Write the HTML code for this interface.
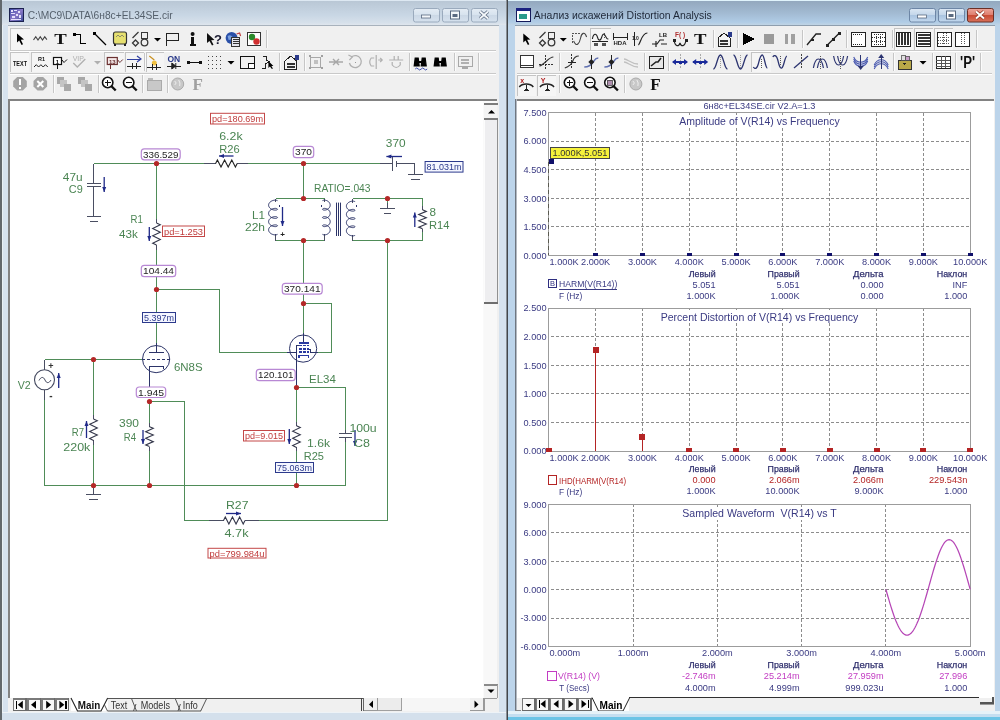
<!DOCTYPE html><html><head><meta charset="utf-8"><style>html,body{margin:0;padding:0;background:#fff;overflow:hidden}svg{display:block}text{font-family:"Liberation Sans",sans-serif}svg{-webkit-font-smoothing:antialiased;will-change:transform}</style></head><body>
<svg width="1000" height="720" viewBox="0 0 1000 720" shape-rendering="crispEdges">
<defs>
<linearGradient id="tbL" x1="0" y1="0" x2="0" y2="1"><stop offset="0" stop-color="#b9c7d5"/><stop offset="0.6" stop-color="#c9d7e5"/><stop offset="0.9" stop-color="#d6e0ea"/><stop offset="1" stop-color="#dfe6ed"/></linearGradient>
<linearGradient id="tbR" x1="0" y1="0" x2="0" y2="1"><stop offset="0" stop-color="#93a8be"/><stop offset="0.5" stop-color="#a2bad2"/><stop offset="0.88" stop-color="#b0cce6"/><stop offset="1" stop-color="#c0d4e4"/></linearGradient>
<linearGradient id="btnL" x1="0" y1="0" x2="0" y2="1"><stop offset="0" stop-color="#e4ecf4"/><stop offset="0.5" stop-color="#d6e2ee"/><stop offset="0.5" stop-color="#cbd8e6"/><stop offset="1" stop-color="#d6e2ee"/></linearGradient>
<linearGradient id="btnR" x1="0" y1="0" x2="0" y2="1"><stop offset="0" stop-color="#dbe7f3"/><stop offset="0.5" stop-color="#c3d6ea"/><stop offset="0.5" stop-color="#aac4e0"/><stop offset="1" stop-color="#c3d9ef"/></linearGradient>
<linearGradient id="btnC" x1="0" y1="0" x2="0" y2="1"><stop offset="0" stop-color="#eba59a"/><stop offset="0.5" stop-color="#de7c6c"/><stop offset="0.5" stop-color="#c94a34"/><stop offset="1" stop-color="#d9735c"/></linearGradient>
</defs>
<rect x="0" y="0" width="1000" height="720" fill="#f0f0f0" stroke="none" stroke-width="1" />
<rect x="0" y="0" width="507" height="720" fill="#d6e2ee" stroke="none" stroke-width="1" />
<rect x="0" y="1" width="507" height="24" fill="url(#tbL)" stroke="none" stroke-width="1" />
<rect x="0" y="0" width="507" height="1" fill="#dde8f2" stroke="none" stroke-width="1" />
<rect x="0" y="0" width="2" height="720" fill="#62686c" stroke="none" stroke-width="1" />
<rect x="2" y="25" width="1" height="695" fill="#e8f0f4" stroke="none" stroke-width="1" />
<rect x="507" y="0" width="493" height="720" fill="#bcd4ea" stroke="none" stroke-width="1" />
<rect x="507" y="1" width="493" height="24" fill="url(#tbR)" stroke="none" stroke-width="1" />
<rect x="507" y="0" width="493" height="1" fill="#e0f4fc" stroke="none" stroke-width="1" />
<rect x="506" y="0" width="1" height="720" fill="#8a9096" stroke="none" stroke-width="1" />
<rect x="507" y="0" width="1" height="720" fill="#42464a" stroke="none" stroke-width="1" />
<rect x="413.5" y="8.5" width="26" height="13.5" rx="2" fill="url(#btnL)" stroke="#9aaabd" stroke-width="1" shape-rendering="auto"/>
<rect x="421.5" y="15" width="9" height="3" fill="#f4f7fa" stroke="#5a6a80" stroke-width="0.8" shape-rendering="auto"/>
<rect x="442.5" y="8.5" width="26" height="13.5" rx="2" fill="url(#btnL)" stroke="#9aaabd" stroke-width="1" shape-rendering="auto"/>
<rect x="450" y="10.5" width="10" height="9" fill="#5a6a80" shape-rendering="auto"/>
<rect x="451" y="11.5" width="8" height="7" fill="#f4f7fa" shape-rendering="auto"/>
<rect x="452.5" y="14" width="5" height="3" fill="#5a6a80" shape-rendering="auto"/>
<rect x="471.5" y="8.5" width="26" height="13.5" rx="2" fill="url(#btnL)" stroke="#9aaabd" stroke-width="1" shape-rendering="auto"/>
<path d="M480 11.5 L488 18.5 M488 11.5 L480 18.5" stroke="#5a6a80" stroke-width="3.4" shape-rendering="auto"/>
<path d="M480 11.5 L488 18.5 M488 11.5 L480 18.5" stroke="#f4f7fa" stroke-width="1.8" shape-rendering="auto"/>
<rect x="909.5" y="8.5" width="26" height="13.5" rx="2" fill="url(#btnR)" stroke="#6d86a6" stroke-width="1" shape-rendering="auto"/>
<rect x="917.5" y="15" width="9" height="3" fill="#fff" stroke="#5a6a80" stroke-width="0.8" shape-rendering="auto"/>
<rect x="938.5" y="8.5" width="26" height="13.5" rx="2" fill="url(#btnR)" stroke="#6d86a6" stroke-width="1" shape-rendering="auto"/>
<rect x="946" y="10.5" width="10" height="9" fill="#5a6a80" shape-rendering="auto"/>
<rect x="947" y="11.5" width="8" height="7" fill="#fff" shape-rendering="auto"/>
<rect x="948.5" y="14" width="5" height="3" fill="#5a6a80" shape-rendering="auto"/>
<rect x="967.5" y="8.5" width="26" height="13.5" rx="2" fill="url(#btnC)" stroke="#6b2f25" stroke-width="1" shape-rendering="auto"/>
<path d="M976 11.5 L984 18.5 M984 11.5 L976 18.5" stroke="#8a3020" stroke-width="3.4" shape-rendering="auto"/>
<path d="M976 11.5 L984 18.5 M984 11.5 L976 18.5" stroke="#fff" stroke-width="2" shape-rendering="auto"/>
<linearGradient id="icg" x1="0" y1="0" x2="1" y2="1"><stop offset="0" stop-color="#3a4aa8"/><stop offset="0.5" stop-color="#8a7ac8"/><stop offset="1" stop-color="#3a4a98"/></linearGradient>
<rect x="9.5" y="8.5" width="14" height="13" fill="url(#icg)" stroke="#1c2250" stroke-width="1" />
<path d="M11 10h2v2h-2zM14 10h3v1h-3zM18 11h2v2h-2zM11 13h4v1h-4zM16 14h2v2h-2zM12 16h3v2h-3zM19 15h2v3h-2zM11 19h10v1h-10z" fill="#e4e0fa"/>
<text x="27.7" y="19" font-size="11" fill="#55606c" text-anchor="start" font-weight="normal" textLength="145" lengthAdjust="spacingAndGlyphs">C:\MC9\DATA\6н8с+EL34SE.cir</text>
<rect x="516" y="8" width="14" height="13" fill="#ffffff" stroke="#141a5a" stroke-width="1" />
<rect x="516" y="8" width="14" height="3" fill="#1a2280" stroke="none" stroke-width="1" />
<rect x="519" y="14" width="8" height="5" fill="#2a9a8a" stroke="none" stroke-width="1" />
<text x="533.8" y="18.8" font-size="11" fill="#1e2838" text-anchor="start" font-weight="normal" textLength="178" lengthAdjust="spacingAndGlyphs">Анализ искажений Distortion Analysis</text>
<rect x="8" y="25" width="491" height="687" fill="#f0f0f0" stroke="none" stroke-width="1" />
<rect x="515" y="25" width="480" height="686" fill="#f0f0f0" stroke="none" stroke-width="1" />
<rect x="8" y="25" width="491" height="1" fill="#a8b2bc" stroke="none" stroke-width="1" />
<rect x="515" y="25" width="480" height="1" fill="#8e9eae" stroke="none" stroke-width="1" />
<rect x="10" y="50" width="486" height="1" fill="#c9c9c9" stroke="none" stroke-width="1" />
<rect x="10" y="51" width="486" height="1" fill="#ffffff" stroke="none" stroke-width="1" />
<rect x="10" y="73" width="486" height="1" fill="#c9c9c9" stroke="none" stroke-width="1" />
<rect x="10" y="74" width="486" height="1" fill="#ffffff" stroke="none" stroke-width="1" />
<rect x="517" y="50" width="475" height="1" fill="#c9c9c9" stroke="none" stroke-width="1" />
<rect x="517" y="51" width="475" height="1" fill="#ffffff" stroke="none" stroke-width="1" />
<rect x="517" y="73" width="475" height="1" fill="#c9c9c9" stroke="none" stroke-width="1" />
<rect x="517" y="74" width="475" height="1" fill="#ffffff" stroke="none" stroke-width="1" />
<rect x="10" y="28" width="20" height="22" fill="#f5f5f5" stroke="none" stroke-width="1" />
<rect x="10" y="28" width="20" height="1" fill="#c4c4c4" stroke="none" stroke-width="1" />
<rect x="10" y="28" width="1" height="22" fill="#c4c4c4" stroke="none" stroke-width="1" />
<path d="M17 33.5 L17 42.5 L19.2 40.5 L21.6 45 L23 44.2 L20.8 39.8 L24 39.6 Z" stroke="none" fill="#000" stroke-width="1" shape-rendering="auto"/>
<path d="M33.5 40 l2.25 -3.3 l2.25 3.3 l2.25 -3.3 l2.25 3.3 l2.25 -3.3 l2.1 3" stroke="#444" fill="none" stroke-width="1.15" shape-rendering="auto"/>
<text x="60.5" y="44.3" font-size="15.5" fill="#111" text-anchor="middle" font-weight="bold" style="font-family:Liberation Serif" textLength="12.5" lengthAdjust="spacingAndGlyphs">T</text>
<rect x="73" y="33" width="3" height="3" fill="#000" stroke="none" stroke-width="1" />
<path d="M75 34.5 H80 V43.5 H86" stroke="#000" fill="none" stroke-width="1" />
<rect x="93" y="32" width="3" height="3" fill="#000" stroke="none" stroke-width="1" />
<path d="M95 34 L106 45" stroke="#000" fill="none" stroke-width="1.2" shape-rendering="auto"/>
<rect x="113.5" y="32" width="13" height="12" rx="2" fill="#e6e070" stroke="#333" stroke-width="1.2" shape-rendering="auto"/>
<path d="M116 37 l2 -2 l2 2 l2 -2 l2 2" stroke="#776" fill="none" stroke-width="0.8" shape-rendering="auto"/>
<rect x="114" y="44" width="2" height="2" fill="#222" stroke="none" stroke-width="1" />
<rect x="124" y="44" width="2" height="2" fill="#222" stroke="none" stroke-width="1" />
<path d="M132.5 38 L138.5 32" stroke="#383838" fill="none" stroke-width="1.3" shape-rendering="auto"/>
<path d="M135.5 40 l3 3 l-3 3 l-3 -3 z" stroke="#383838" fill="none" stroke-width="1.3" shape-rendering="auto"/>
<rect x="141.5" y="32" width="6" height="6" fill="none" stroke="#383838" stroke-width="1" />
<circle cx="144.5" cy="42.5" r="3.3" fill="none" stroke="#383838" stroke-width="1.3" shape-rendering="auto"/>
<path d="M154.0 38 L161.0 38 L157.5 41.5 Z" stroke="none" fill="#000" stroke-width="1" shape-rendering="auto"/>
<path d="M166.5 46 V33 H178.5 V40 H166.5" stroke="#222" fill="none" stroke-width="1" />
<circle cx="192.6" cy="34" r="2" fill="#111" shape-rendering="auto"/>
<path d="M190.6 37 H194.1 V44 H195.6 V46 H189.6 V44 H191.1 V39 H190.6 Z" stroke="none" fill="#111" stroke-width="1" />
<path d="M207 33 L207 43 L209.5 41 L212 45.5 L213.5 44.8 L211.2 40.2 L214.5 40 Z" stroke="none" fill="#111" stroke-width="1" shape-rendering="auto"/>
<text x="218" y="43.5" font-size="13" fill="#1a1a30" text-anchor="middle" font-weight="bold" >?</text>
<circle cx="231.6" cy="38" r="6" fill="#2a50a8" shape-rendering="auto"/>
<path d="M227.6 36 q3 -2 5 1 q-1 3 -4 3 z" stroke="none" fill="#7aa0e0" stroke-width="1" shape-rendering="auto"/>
<rect x="231.6" y="37" width="8" height="9" fill="#e4e4ec" stroke="#333" stroke-width="1" />
<rect x="232.6" y="39" width="6" height="1" fill="#333" stroke="none" stroke-width="1" />
<rect x="232.6" y="41" width="6" height="1" fill="#333" stroke="none" stroke-width="1" />
<rect x="232.6" y="43" width="6" height="1" fill="#333" stroke="none" stroke-width="1" />
<path d="M236.6 34 l3 -1 l1 3" stroke="#c04040" fill="none" stroke-width="1.2" shape-rendering="auto"/>
<rect x="247.5" y="32.5" width="13" height="13" fill="#fff" stroke="#333" stroke-width="1" />
<circle cx="252" cy="37" r="3.2" fill="#2a8a2a" shape-rendering="auto"/>
<circle cx="256.5" cy="41.5" r="3.2" fill="#d03030" shape-rendering="auto"/>
<rect x="266" y="30" width="1" height="18" fill="#c6c6c6" stroke="none" stroke-width="1" />
<rect x="267" y="30" width="1" height="18" fill="#fbfbfb" stroke="none" stroke-width="1" />
<rect x="10" y="52" width="19" height="20" fill="#f5f5f5" stroke="none" stroke-width="1" />
<rect x="10" y="52" width="19" height="1" fill="#c4c4c4" stroke="none" stroke-width="1" />
<rect x="10" y="52" width="1" height="20" fill="#c4c4c4" stroke="none" stroke-width="1" />
<rect x="31" y="52" width="20" height="20" fill="#f5f5f5" stroke="none" stroke-width="1" />
<rect x="31" y="52" width="20" height="1" fill="#c4c4c4" stroke="none" stroke-width="1" />
<rect x="31" y="52" width="1" height="20" fill="#c4c4c4" stroke="none" stroke-width="1" />
<text x="20" y="65.5" font-size="8" fill="#111" text-anchor="middle" font-weight="bold" textLength="14" lengthAdjust="spacingAndGlyphs">TEXT</text>
<text x="41.5" y="61" font-size="5.5" fill="#111" text-anchor="middle" font-weight="bold" >R1</text>
<path d="M34 67 l2.3 -2.3 l2.3 2.3 l2.3 -2.3 l2.3 2.3 l2.3 -2.3 l2.3 2.3" stroke="#222" fill="none" stroke-width="1" shape-rendering="auto"/>
<rect x="53.5" y="57.5" width="8" height="7" fill="#fff" stroke="#111" stroke-width="1.2" shape-rendering="auto"/>
<text x="57.5" y="63.6" font-size="6" fill="#111" text-anchor="middle" font-weight="bold" >1</text>
<path d="M57 65 V68.5" stroke="#111" fill="none" stroke-width="1" />
<path d="M62.0 60 l2 2.5 l1 -1 l2 -2" stroke="#111" fill="none" stroke-width="1" shape-rendering="auto"/>
<text x="78.3" y="61" font-size="7" fill="#b0b0b0" text-anchor="middle" font-weight="normal" >VIP</text>
<path d="M73.3 63 l4 4 l8 -8" stroke="#b0b0b0" fill="none" stroke-width="1.3" shape-rendering="auto"/>
<path d="M94.0 61 L101.0 61 L97.5 64.5 Z" stroke="none" fill="#b0b0b0" stroke-width="1" shape-rendering="auto"/>
<rect x="104" y="52" width="20" height="20" fill="#f5f5f5" stroke="none" stroke-width="1" />
<rect x="104" y="52" width="20" height="1" fill="#c4c4c4" stroke="none" stroke-width="1" />
<rect x="104" y="52" width="1" height="20" fill="#c4c4c4" stroke="none" stroke-width="1" />
<rect x="107.3" y="57.5" width="10" height="7" fill="#f4e8e8" stroke="#6a3030" stroke-width="1.2" shape-rendering="auto"/>
<text x="112.3" y="63.6" font-size="6" fill="#6a3030" text-anchor="middle" font-weight="bold" >13</text>
<path d="M110.8 65 V68.5" stroke="#6a3030" fill="none" stroke-width="1" />
<path d="M117.8 60 l2 2.5 l1 -1 l2 -2" stroke="#6a3030" fill="none" stroke-width="1" shape-rendering="auto"/>
<rect x="125" y="52" width="19" height="20" fill="#f5f5f5" stroke="none" stroke-width="1" />
<rect x="125" y="52" width="19" height="1" fill="#c4c4c4" stroke="none" stroke-width="1" />
<rect x="125" y="52" width="1" height="20" fill="#c4c4c4" stroke="none" stroke-width="1" />
<path d="M127 59 H140" stroke="#3040a0" fill="none" stroke-width="1" />
<path d="M137 56 L141 59 L137 62" stroke="#3040a0" fill="none" stroke-width="1.2" shape-rendering="auto"/>
<path d="M127 66 H141" stroke="#222" fill="none" stroke-width="1" />
<path d="M132 63 V69 M136 63 V69" stroke="#222" fill="none" stroke-width="1" />
<rect x="144" y="53" width="1" height="18" fill="#c6c6c6" stroke="none" stroke-width="1" />
<rect x="145" y="53" width="1" height="18" fill="#fbfbfb" stroke="none" stroke-width="1" />
<rect x="146" y="52" width="18" height="20" fill="#f5f5f5" stroke="none" stroke-width="1" />
<rect x="146" y="52" width="18" height="1" fill="#c4c4c4" stroke="none" stroke-width="1" />
<rect x="146" y="52" width="1" height="20" fill="#c4c4c4" stroke="none" stroke-width="1" />
<path d="M149.3 56 L154.3 60" stroke="#c89020" fill="none" stroke-width="1.2" shape-rendering="auto"/>
<circle cx="154.3" cy="63" r="2.5" fill="#f0c040" shape-rendering="auto"/>
<path d="M147.3 67 H161.3" stroke="#222" fill="none" stroke-width="1" />
<path d="M152.3 64 V70 M156.3 64 V70" stroke="#222" fill="none" stroke-width="1" />
<text x="173.8" y="62" font-size="8.5" fill="#2a3a8a" text-anchor="middle" font-weight="bold" >ON</text>
<path d="M166.8 66 H180.8" stroke="#222" fill="none" stroke-width="1" />
<path d="M171.8 63 L175.8 66 L171.8 69 Z M175.8 63 V69" stroke="#222" fill="#222" stroke-width="1" shape-rendering="auto"/>
<path d="M188 62 H200" stroke="#111" fill="none" stroke-width="1" />
<rect x="186.5" y="60.5" width="3" height="3" fill="#111" stroke="none" stroke-width="1" />
<rect x="198.5" y="60.5" width="3" height="3" fill="#111" stroke="none" stroke-width="1" />
<rect x="208" y="56" width="1" height="1" fill="#444" stroke="none" stroke-width="1" />
<rect x="208" y="60" width="1" height="1" fill="#444" stroke="none" stroke-width="1" />
<rect x="208" y="64" width="1" height="1" fill="#444" stroke="none" stroke-width="1" />
<rect x="208" y="68" width="1" height="1" fill="#444" stroke="none" stroke-width="1" />
<rect x="212" y="56" width="1" height="1" fill="#444" stroke="none" stroke-width="1" />
<rect x="212" y="60" width="1" height="1" fill="#444" stroke="none" stroke-width="1" />
<rect x="212" y="64" width="1" height="1" fill="#444" stroke="none" stroke-width="1" />
<rect x="212" y="68" width="1" height="1" fill="#444" stroke="none" stroke-width="1" />
<rect x="216" y="56" width="1" height="1" fill="#444" stroke="none" stroke-width="1" />
<rect x="216" y="60" width="1" height="1" fill="#444" stroke="none" stroke-width="1" />
<rect x="216" y="64" width="1" height="1" fill="#444" stroke="none" stroke-width="1" />
<rect x="216" y="68" width="1" height="1" fill="#444" stroke="none" stroke-width="1" />
<rect x="220" y="56" width="1" height="1" fill="#444" stroke="none" stroke-width="1" />
<rect x="220" y="60" width="1" height="1" fill="#444" stroke="none" stroke-width="1" />
<rect x="220" y="64" width="1" height="1" fill="#444" stroke="none" stroke-width="1" />
<rect x="220" y="68" width="1" height="1" fill="#444" stroke="none" stroke-width="1" />
<path d="M227.5 61 L234.5 61 L231 64.5 Z" stroke="none" fill="#000" stroke-width="1" shape-rendering="auto"/>
<rect x="240" y="56" width="14" height="12" fill="none" stroke="#111" stroke-width="1" />
<rect x="248" y="63" width="6" height="5" fill="#fff" stroke="#111" stroke-width="1" />
<path d="M263.4 56 H266.4 V60 L269.4 62 L265.4 64 V68 H262.4" stroke="#222" fill="none" stroke-width="1" />
<path d="M268.4 61 L268.4 68 L269.9 66.5 L271.9 69 L272.9 68.5 L271.4 66 L273.4 66 Z" stroke="none" fill="#000" stroke-width="1" shape-rendering="auto"/>
<rect x="279" y="53" width="1" height="18" fill="#c6c6c6" stroke="none" stroke-width="1" />
<rect x="280" y="53" width="1" height="18" fill="#fbfbfb" stroke="none" stroke-width="1" />
<path d="M284.8 61 L290.8 56 L296.8 61 V69 H284.8 Z" stroke="#222" fill="#f4f4f4" stroke-width="1" />
<rect x="286.8" y="63" width="8" height="1.5" fill="#333" stroke="none" stroke-width="1" />
<rect x="286.8" y="66" width="8" height="1.5" fill="#333" stroke="none" stroke-width="1" />
<rect x="294.8" y="55" width="4" height="5" fill="#2a3a8a" stroke="none" stroke-width="1" />
<rect x="304" y="53" width="1" height="18" fill="#c6c6c6" stroke="none" stroke-width="1" />
<rect x="305" y="53" width="1" height="18" fill="#fbfbfb" stroke="none" stroke-width="1" />
<rect x="310.9" y="57" width="10" height="10" fill="none" stroke="#a8a8a8" stroke-width="1" />
<rect x="308.9" y="55" width="2" height="2" fill="#a0a0a0" stroke="none" stroke-width="1" />
<rect x="320.9" y="55" width="2" height="2" fill="#a0a0a0" stroke="none" stroke-width="1" />
<rect x="308.9" y="67" width="2" height="2" fill="#a0a0a0" stroke="none" stroke-width="1" />
<rect x="320.9" y="67" width="2" height="2" fill="#a0a0a0" stroke="none" stroke-width="1" />
<rect x="313.9" y="60" width="4" height="4" fill="#c0c0c0" stroke="none" stroke-width="1" />
<path d="M329 62 H343 M333 59 L336 62 L333 65 M339 59 L336 62 L339 65" stroke="#a8a8a8" fill="none" stroke-width="1.4" shape-rendering="auto"/>
<path d="M351.4 57 A6 6 0 1 1 349.4 63" stroke="#b0b0b0" fill="none" stroke-width="1.3" shape-rendering="auto"/>
<path d="M348.4 55 L352.4 57 L349.4 60" stroke="#b0b0b0" fill="none" stroke-width="1.2" shape-rendering="auto"/>
<rect x="354.9" y="61.5" width="1.5" height="1.5" fill="#999" stroke="none" stroke-width="1" />
<path d="M376.2 55 V69 M374.2 58 H371.2 Q368.2 62 371.2 66 H374.2 M378.2 60 H382.2 M380.2 58 L382.2 60 L380.2 62" stroke="#b0b0b0" fill="none" stroke-width="1.2" shape-rendering="auto"/>
<path d="M389.2 60 H403.2 M392.2 62 V65 Q396.2 70 400.2 65 V62 M394.2 56 V60 M398.2 56 V60" stroke="#b0b0b0" fill="none" stroke-width="1.2" shape-rendering="auto"/>
<rect x="409" y="53" width="1" height="18" fill="#c6c6c6" stroke="none" stroke-width="1" />
<rect x="410" y="53" width="1" height="18" fill="#fbfbfb" stroke="none" stroke-width="1" />
<path d="M414.2 66 L415.2 58 H418.2 L419.2 66 Z M421.2 66 L422.2 58 H425.2 L426.2 66 Z" stroke="#000" fill="#000" stroke-width="1.2" shape-rendering="auto"/>
<rect x="418.2" y="61" width="4" height="2" fill="#000" stroke="none" stroke-width="1" />
<path d="M415.2 69 q1.5 -2 3 0 t3 0 t3 0 t3 0" stroke="#4050b0" fill="none" stroke-width="1" shape-rendering="auto"/>
<path d="M434.2 66 L435.2 58 H438.2 L439.2 66 Z M441.2 66 L442.2 58 H445.2 L446.2 66 Z" stroke="#000" fill="#000" stroke-width="1.2" shape-rendering="auto"/>
<rect x="438.2" y="61" width="4" height="2" fill="#000" stroke="none" stroke-width="1" />
<rect x="453.5" y="53" width="1" height="18" fill="#c6c6c6" stroke="none" stroke-width="1" />
<rect x="454.5" y="53" width="1" height="18" fill="#fbfbfb" stroke="none" stroke-width="1" />
<rect x="458" y="56" width="14" height="10" fill="none" stroke="#a8a8a8" stroke-width="1" />
<rect x="461" y="59" width="8" height="1.5" fill="#b0b0b0" stroke="none" stroke-width="1" />
<rect x="461" y="62" width="8" height="1.5" fill="#b0b0b0" stroke="none" stroke-width="1" />
<rect x="462" y="67" width="6" height="2" fill="#a8a8a8" stroke="none" stroke-width="1" />
<rect x="477.5" y="53" width="1" height="18" fill="#c6c6c6" stroke="none" stroke-width="1" />
<rect x="478.5" y="53" width="1" height="18" fill="#fbfbfb" stroke="none" stroke-width="1" />
<path d="M17.2 77 h5.6 l4 4 v5.6 l-4 4 h-5.6 l-4 -4 v-5.6 z" fill="#a4a4a4" shape-rendering="auto"/>
<rect x="19" y="79" width="2" height="6" fill="#fff" stroke="none" stroke-width="1" />
<rect x="19" y="87" width="2" height="2" fill="#fff" stroke="none" stroke-width="1" />
<path d="M37.5 77 h5.6 l4 4 v5.6 l-4 4 h-5.6 l-4 -4 v-5.6 z" fill="#a4a4a4" shape-rendering="auto"/>
<path d="M37.3 81 L43.3 87 M43.3 81 L37.3 87" stroke="#fff" fill="none" stroke-width="2" shape-rendering="auto"/>
<rect x="52.5" y="75" width="1" height="18" fill="#c6c6c6" stroke="none" stroke-width="1" />
<rect x="53.5" y="75" width="1" height="18" fill="#fbfbfb" stroke="none" stroke-width="1" />
<rect x="57.400000000000006" y="77" width="7" height="7" fill="#a8a8a8" stroke="none" stroke-width="1" />
<rect x="60.400000000000006" y="80" width="7" height="7" fill="#c4c4c4" stroke="none" stroke-width="1" />
<rect x="64.4" y="84" width="7" height="7" fill="#a8a8a8" stroke="none" stroke-width="1" />
<rect x="77.5" y="77" width="7" height="7" fill="#a8a8a8" stroke="none" stroke-width="1" />
<rect x="80.5" y="80" width="7" height="7" fill="#c4c4c4" stroke="none" stroke-width="1" />
<rect x="84.5" y="84" width="7" height="7" fill="#a8a8a8" stroke="none" stroke-width="1" />
<rect x="97.5" y="75" width="1" height="18" fill="#c6c6c6" stroke="none" stroke-width="1" />
<rect x="98.5" y="75" width="1" height="18" fill="#fbfbfb" stroke="none" stroke-width="1" />
<circle cx="107.7" cy="82.5" r="5.2" fill="#fff" stroke="#111" stroke-width="1.6" shape-rendering="auto"/>
<path d="M111.2 86 L115.7 90.5" stroke="#111" fill="none" stroke-width="2.4" shape-rendering="auto"/>
<path d="M104.7 82.5 H110.7 M107.7 79.5 V85.5" stroke="#111" fill="none" stroke-width="1" />
<circle cx="128.7" cy="82.5" r="5.2" fill="#fff" stroke="#111" stroke-width="1.6" shape-rendering="auto"/>
<path d="M132.2 86 L136.7 90.5" stroke="#111" fill="none" stroke-width="2.4" shape-rendering="auto"/>
<path d="M125.69999999999999 82.5 H131.7" stroke="#111" fill="none" stroke-width="1" />
<rect x="142" y="75" width="1" height="18" fill="#c6c6c6" stroke="none" stroke-width="1" />
<rect x="143" y="75" width="1" height="18" fill="#fbfbfb" stroke="none" stroke-width="1" />
<rect x="147.3" y="80" width="14" height="10" fill="#c8c8c8" stroke="#aaa" stroke-width="1" />
<rect x="148.3" y="78" width="5" height="2" fill="#bbb" stroke="none" stroke-width="1" />
<rect x="166.5" y="75" width="1" height="18" fill="#c6c6c6" stroke="none" stroke-width="1" />
<rect x="167.5" y="75" width="1" height="18" fill="#fbfbfb" stroke="none" stroke-width="1" />
<circle cx="177.7" cy="84" r="6" fill="#c8c8c8" stroke="#aaa" shape-rendering="auto"/>
<path d="M174.7 81 q3 2 0 4 M178.7 80 q2 3 1 6" stroke="#eee" fill="none" stroke-width="1" shape-rendering="auto"/>
<text x="197.8" y="90" font-size="17" fill="#a0a0a0" text-anchor="middle" font-weight="bold" style="font-family:Liberation Serif">F</text>
<path d="M523.3 33.5 L523.3 42.5 L525.5 40.5 L527.9 45 L529.3 44.2 L527.0999999999999 39.8 L530.3 39.6 Z" stroke="none" fill="#000" stroke-width="1" shape-rendering="auto"/>
<path d="M539.5 38 L545.5 32" stroke="#383838" fill="none" stroke-width="1.3" shape-rendering="auto"/>
<path d="M542.5 40 l3 3 l-3 3 l-3 -3 z" stroke="#383838" fill="none" stroke-width="1.3" shape-rendering="auto"/>
<rect x="548.5" y="32" width="6" height="6" fill="none" stroke="#383838" stroke-width="1" />
<circle cx="551.5" cy="42.5" r="3.3" fill="none" stroke="#383838" stroke-width="1.3" shape-rendering="auto"/>
<path d="M559.8 38 L566.8 38 L563.3 41.5 Z" stroke="none" fill="#000" stroke-width="1" shape-rendering="auto"/>
<path d="M572.6 43 V33 H580.6" stroke="#555" fill="none" stroke-width="1" stroke-dasharray="2 1"/>
<path d="M573.6 41 C576.6 48 579.6 43 580.6 38 S584.6 31 586.6 37" stroke="#444" fill="none" stroke-width="1.1" shape-rendering="auto"/>
<rect x="590" y="28" width="21" height="22" fill="#f5f5f5" stroke="none" stroke-width="1" />
<rect x="590" y="28" width="21" height="1" fill="#c4c4c4" stroke="none" stroke-width="1" />
<rect x="590" y="28" width="1" height="22" fill="#c4c4c4" stroke="none" stroke-width="1" />
<path d="M592.4 39 C593.4 33 596.4 33 597.4 37 S600.4 41 601.4 38 S603.4 32 605.4 36 S607.4 39 608.4 39" stroke="#222" fill="none" stroke-width="1.1" shape-rendering="auto"/>
<path d="M604.4 33 V39" stroke="#555" fill="none" stroke-width="1" stroke-dasharray="1 1"/>
<path d="M592.4 41 H608.4" stroke="#222" fill="none" stroke-width="1" />
<rect x="594.4" y="43" width="4" height="3" fill="#555" stroke="none" stroke-width="1" />
<rect x="602.4" y="43" width="4" height="3" fill="#555" stroke="none" stroke-width="1" />
<path d="M613 33 V40 M627 33 V40 M613 37 H627" stroke="#222" fill="none" stroke-width="1" />
<text x="620" y="45" font-size="6" fill="#222" text-anchor="middle" font-weight="bold" >HDA</text>
<path d="M634.4 32 V46" stroke="#222" fill="none" stroke-width="1" />
<text x="635.4" y="40" font-size="5" fill="#222" text-anchor="middle" font-weight="bold" >1.0</text>
<path d="M638.4 45 C640.4 44 641.4 33 647.4 33" stroke="#222" fill="none" stroke-width="1.2" shape-rendering="auto"/>
<text x="663" y="37" font-size="6" fill="#222" text-anchor="middle" font-weight="bold" >LB</text>
<path d="M652 44 H657 L660 40 H664 M656 41 V47 M661 44 H667" stroke="#222" fill="none" stroke-width="1.2" shape-rendering="auto"/>
<text x="680" y="37" font-size="6.5" fill="#b03030" text-anchor="middle" font-weight="bold" >F( )</text>
<path d="M674 40 C675 47 679 47 680 43 C681 47 685 47 686 40" stroke="#222" fill="none" stroke-width="1.2" shape-rendering="auto"/>
<rect x="673" y="39" width="3" height="3" fill="#222" stroke="none" stroke-width="1" />
<rect x="685" y="39" width="3" height="3" fill="#222" stroke="none" stroke-width="1" />
<text x="700.2" y="44.3" font-size="15.5" fill="#111" text-anchor="middle" font-weight="bold" style="font-family:Liberation Serif" textLength="12.5" lengthAdjust="spacingAndGlyphs">T</text>
<rect x="713" y="30" width="1" height="18" fill="#c6c6c6" stroke="none" stroke-width="1" />
<rect x="714" y="30" width="1" height="18" fill="#fbfbfb" stroke="none" stroke-width="1" />
<path d="M718 38 L724 33 L730 38 V46 H718 Z" stroke="#222" fill="#f4f4f4" stroke-width="1" />
<rect x="720" y="40" width="8" height="1.5" fill="#333" stroke="none" stroke-width="1" />
<rect x="720" y="43" width="8" height="1.5" fill="#333" stroke="none" stroke-width="1" />
<rect x="728" y="32" width="4" height="5" fill="#2a3a8a" stroke="none" stroke-width="1" />
<rect x="737" y="30" width="1" height="18" fill="#c6c6c6" stroke="none" stroke-width="1" />
<rect x="738" y="30" width="1" height="18" fill="#fbfbfb" stroke="none" stroke-width="1" />
<path d="M743 33 L755 39 L743 45 Z" stroke="none" fill="#000" stroke-width="1" />
<rect x="764" y="34" width="10" height="10" fill="#9a9a9a" stroke="none" stroke-width="1" />
<rect x="784.9" y="34" width="3.5" height="10" fill="#a0a0a0" stroke="none" stroke-width="1" />
<rect x="791.4" y="34" width="3.5" height="10" fill="#a0a0a0" stroke="none" stroke-width="1" />
<rect x="802" y="30" width="1" height="18" fill="#c6c6c6" stroke="none" stroke-width="1" />
<rect x="803" y="30" width="1" height="18" fill="#fbfbfb" stroke="none" stroke-width="1" />
<path d="M807 45 L816 34 H821" stroke="#222" fill="none" stroke-width="1.3" shape-rendering="auto"/>
<rect x="811" y="38.5" width="2.5" height="2.5" fill="#222" stroke="none" stroke-width="1" />
<path d="M827.4 45 L839.4 33" stroke="#222" fill="none" stroke-width="1.3" shape-rendering="auto"/>
<rect x="825.9" y="43.5" width="3" height="3" fill="#222" stroke="none" stroke-width="1" />
<rect x="831.9" y="37.5" width="3" height="3" fill="#222" stroke="none" stroke-width="1" />
<rect x="837.9" y="31.5" width="3" height="3" fill="#222" stroke="none" stroke-width="1" />
<rect x="846" y="30" width="1" height="18" fill="#c6c6c6" stroke="none" stroke-width="1" />
<rect x="847" y="30" width="1" height="18" fill="#fbfbfb" stroke="none" stroke-width="1" />
<rect x="851.1" y="32" width="14" height="14" fill="#fff" stroke="#222" stroke-width="1" />
<path d="M853.1 34 H863.1 M853.1 44 H863.1" stroke="#222" fill="none" stroke-width="1" stroke-dasharray="1 1"/>
<rect x="871.5" y="32" width="14" height="14" fill="#fff" stroke="#222" stroke-width="1" />
<path d="M873.5 34 H883.5 M873.5 44 H883.5" stroke="#222" fill="none" stroke-width="1" stroke-dasharray="1 1"/>
<path d="M871.5 37 H885.5 M871.5 41 H885.5 M876.5 32 V46 M880.5 32 V46" stroke="#333" fill="none" stroke-width="1" stroke-dasharray="1 1"/>
<rect x="892" y="30" width="1" height="18" fill="#c6c6c6" stroke="none" stroke-width="1" />
<rect x="893" y="30" width="1" height="18" fill="#fbfbfb" stroke="none" stroke-width="1" />
<rect x="894" y="28" width="19" height="22" fill="#f5f5f5" stroke="none" stroke-width="1" />
<rect x="894" y="28" width="19" height="1" fill="#c4c4c4" stroke="none" stroke-width="1" />
<rect x="894" y="28" width="1" height="22" fill="#c4c4c4" stroke="none" stroke-width="1" />
<rect x="914" y="28" width="19" height="22" fill="#f5f5f5" stroke="none" stroke-width="1" />
<rect x="914" y="28" width="19" height="1" fill="#c4c4c4" stroke="none" stroke-width="1" />
<rect x="914" y="28" width="1" height="22" fill="#c4c4c4" stroke="none" stroke-width="1" />
<rect x="934" y="28" width="19" height="22" fill="#f5f5f5" stroke="none" stroke-width="1" />
<rect x="934" y="28" width="19" height="1" fill="#c4c4c4" stroke="none" stroke-width="1" />
<rect x="934" y="28" width="1" height="22" fill="#c4c4c4" stroke="none" stroke-width="1" />
<rect x="896.5" y="32" width="14" height="14" fill="#fff" stroke="#222" stroke-width="1" />
<rect x="898.0" y="33" width="2" height="12" fill="#333" stroke="none" stroke-width="1" />
<rect x="901.0" y="33" width="2" height="12" fill="#333" stroke="none" stroke-width="1" />
<rect x="904.0" y="33" width="2" height="12" fill="#333" stroke="none" stroke-width="1" />
<rect x="907.0" y="33" width="2" height="12" fill="#333" stroke="none" stroke-width="1" />
<rect x="916.7" y="32" width="14" height="14" fill="#fff" stroke="#222" stroke-width="1" />
<rect x="917.7" y="33.5" width="12" height="2" fill="#333" stroke="none" stroke-width="1" />
<rect x="917.7" y="36.5" width="12" height="2" fill="#333" stroke="none" stroke-width="1" />
<rect x="917.7" y="39.5" width="12" height="2" fill="#333" stroke="none" stroke-width="1" />
<rect x="917.7" y="42.5" width="12" height="2" fill="#333" stroke="none" stroke-width="1" />
<rect x="937" y="32" width="14" height="14" fill="#fff" stroke="#222" stroke-width="1" />
<path d="M943 33 V45 M946 33 V45 M938 37 H950 M938 40 H950 M938 43 H950" stroke="#555" fill="none" stroke-width="1" stroke-dasharray="1 1"/>
<rect x="955.8" y="32" width="14" height="14" fill="#fff" stroke="#222" stroke-width="1" />
<path d="M961.8 33 V45 M964.8 33 V45" stroke="#555" fill="none" stroke-width="1" stroke-dasharray="1 1"/>
<rect x="975.5" y="30" width="1" height="18" fill="#c6c6c6" stroke="none" stroke-width="1" />
<rect x="976.5" y="30" width="1" height="18" fill="#fbfbfb" stroke="none" stroke-width="1" />
<rect x="520.5" y="55.5" width="13" height="12" fill="#fff" stroke="#333" stroke-width="1" />
<rect x="521" y="64.5" width="12" height="1" fill="#333" stroke="none" stroke-width="1" />
<path d="M545.4 55 V69 M539.4 64 H553.4" stroke="#333" fill="none" stroke-width="1" stroke-dasharray="2 1"/>
<path d="M539.4 66 C544.4 65 548.4 57 553.4 57" stroke="#333" fill="none" stroke-width="1.1" shape-rendering="auto"/>
<rect x="559" y="53" width="1" height="18" fill="#c6c6c6" stroke="none" stroke-width="1" />
<rect x="560" y="53" width="1" height="18" fill="#fbfbfb" stroke="none" stroke-width="1" />
<path d="M564.8 68 C567.8 67 571.8 64 572.8 61 S575.8 56 578.8 56" stroke="#333" fill="none" stroke-width="1.2" shape-rendering="auto"/>
<path d="M571.8 54 V69" stroke="#333" fill="none" stroke-width="1" stroke-dasharray="2 1"/>
<path d="M567.8 62 H575.8" stroke="#222" fill="none" stroke-width="1" />
<path d="M584.3 67 C588.3 67 591.3 65 593.3 62 S595.3 58 598.3 58" stroke="#6070b0" fill="none" stroke-width="1.5" shape-rendering="auto"/>
<path d="M591.3 55 V69" stroke="#222" fill="none" stroke-width="1" />
<path d="M588.3 62 L591.3 59 L594.3 62 L591.3 65 Z" stroke="none" fill="#222" stroke-width="1" shape-rendering="auto"/>
<path d="M604.4 67 C608.4 67 611.4 65 613.4 62 S615.4 58 618.4 58" stroke="#6070b0" fill="none" stroke-width="1.5" shape-rendering="auto"/>
<path d="M611.4 55 V69" stroke="#222" fill="none" stroke-width="1" />
<path d="M608.4 62 L611.4 59 L614.4 62 L611.4 65 Z" stroke="none" fill="#222" stroke-width="1" shape-rendering="auto"/>
<path d="M624 59 C628 59 631 64 638 64 M624 62 C628 62 631 67 638 67" stroke="#c0c0c0" fill="none" stroke-width="1.3" shape-rendering="auto"/>
<rect x="643.5" y="53" width="1" height="18" fill="#c6c6c6" stroke="none" stroke-width="1" />
<rect x="644.5" y="53" width="1" height="18" fill="#fbfbfb" stroke="none" stroke-width="1" />
<rect x="649" y="56" width="14" height="12" fill="#e8e8e8" stroke="#222" stroke-width="1" />
<path d="M651 66 L656 62 H658 L661 58" stroke="#222" fill="none" stroke-width="1.6" shape-rendering="auto"/>
<rect x="668" y="53" width="1" height="18" fill="#c6c6c6" stroke="none" stroke-width="1" />
<rect x="669" y="53" width="1" height="18" fill="#fbfbfb" stroke="none" stroke-width="1" />
<path d="M680 54 V69" stroke="#aaa" fill="none" stroke-width="1" stroke-dasharray="2 1"/>
<path d="M673 62 H687" stroke="#1a2a9a" fill="none" stroke-width="1.8" />
<path d="M672 62 L676 59 V65 Z M688 62 L684 59 V65 Z" stroke="none" fill="#1a2a9a" stroke-width="1" shape-rendering="auto"/>
<rect x="678.5" y="60.5" width="3" height="3" fill="#1a2a9a" stroke="none" stroke-width="1" />
<path d="M700.2 54 V69" stroke="#aaa" fill="none" stroke-width="1" stroke-dasharray="2 1"/>
<path d="M693.2 62 H707.2" stroke="#1a2a9a" fill="none" stroke-width="1.8" />
<path d="M692.2 62 L696.2 59 V65 Z M708.2 62 L704.2 59 V65 Z" stroke="none" fill="#1a2a9a" stroke-width="1" shape-rendering="auto"/>
<rect x="698.7" y="60.5" width="3" height="3" fill="#1a2a9a" stroke="none" stroke-width="1" />
<path d="M720.4 55 V69" stroke="#999" fill="none" stroke-width="1" stroke-dasharray="1 1"/>
<path d="M713.4 69 C716.4 69 717.4 55 720.4 55 C723.4 55 724.4 69 727.4 69" stroke="#2c3470" fill="none" stroke-width="1.3" shape-rendering="auto"/>
<path d="M740.5 55 V69" stroke="#999" fill="none" stroke-width="1" stroke-dasharray="1 1"/>
<path d="M733.5 55 C736.5 55 737.5 69 740.5 69 C743.5 69 744.5 55 747.5 55" stroke="#2c3470" fill="none" stroke-width="1.3" shape-rendering="auto"/>
<rect x="751" y="52" width="20" height="20" fill="#f5f5f5" stroke="none" stroke-width="1" />
<rect x="751" y="52" width="20" height="1" fill="#c4c4c4" stroke="none" stroke-width="1" />
<rect x="751" y="52" width="1" height="20" fill="#c4c4c4" stroke="none" stroke-width="1" />
<path d="M753.3 67 C755.3 70 757.3 68 758.3 64 S760.3 55 762.3 55 S765.3 68 767.3 68" stroke="#2c3470" fill="none" stroke-width="1.3" shape-rendering="auto"/>
<path d="M761.3 59 V69" stroke="#555" fill="none" stroke-width="1" stroke-dasharray="1 1"/>
<path d="M772.8 57 C774.8 54 776.8 56 777.8 60 S779.8 69 781.8 68 S784.8 57 786.8 56" stroke="#2c3470" fill="none" stroke-width="1.3" shape-rendering="auto"/>
<path d="M780.8 56 V65" stroke="#555" fill="none" stroke-width="1" stroke-dasharray="1 1"/>
<path d="M794 68 L808 56" stroke="#2c3470" fill="none" stroke-width="1.3" shape-rendering="auto"/>
<path d="M801 54 V69" stroke="#444" fill="none" stroke-width="1" stroke-dasharray="2 1"/>
<path d="M813.4 68 C815.4 56 821.4 56 823.4 68 M817.4 68 C819.4 56 825.4 56 827.4 68" stroke="#2c3470" fill="none" stroke-width="1.2" shape-rendering="auto"/>
<path d="M820.4 56 V69" stroke="#555" fill="none" stroke-width="1" stroke-dasharray="1 1"/>
<path d="M833.6 56 C835.6 68 841.6 68 843.6 56 M837.6 56 C839.6 68 845.6 68 847.6 56" stroke="#2c3470" fill="none" stroke-width="1.2" shape-rendering="auto"/>
<path d="M840.6 56 V69" stroke="#555" fill="none" stroke-width="1" stroke-dasharray="1 1"/>
<path d="M853.7 57 C856.7 64 864.7 64 867.7 57" stroke="#4a5ab0" fill="none" stroke-width="1.1" shape-rendering="auto"/>
<path d="M853.7 59 C856.7 66 864.7 66 867.7 59" stroke="#4a5ab0" fill="none" stroke-width="1.1" shape-rendering="auto"/>
<path d="M853.7 61 C856.7 68 864.7 68 867.7 61" stroke="#4a5ab0" fill="none" stroke-width="1.1" shape-rendering="auto"/>
<path d="M860.7 55 V69" stroke="#2c3470" fill="none" stroke-width="1" />
<path d="M857.7 66 L860.7 70 L863.7 66 Z" stroke="none" fill="#2c3470" stroke-width="1" shape-rendering="auto"/>
<path d="M874.2 65 C877.2 58 885.2 58 888.2 65" stroke="#4a5ab0" fill="none" stroke-width="1.1" shape-rendering="auto"/>
<path d="M874.2 67 C877.2 60 885.2 60 888.2 67" stroke="#4a5ab0" fill="none" stroke-width="1.1" shape-rendering="auto"/>
<path d="M874.2 69 C877.2 62 885.2 62 888.2 69" stroke="#4a5ab0" fill="none" stroke-width="1.1" shape-rendering="auto"/>
<path d="M881.2 55 V69" stroke="#2c3470" fill="none" stroke-width="1" />
<path d="M878.2 58 L881.2 54 L884.2 58 Z" stroke="none" fill="#2c3470" stroke-width="1" shape-rendering="auto"/>
<rect x="893" y="53" width="1" height="18" fill="#c6c6c6" stroke="none" stroke-width="1" />
<rect x="894" y="53" width="1" height="18" fill="#fbfbfb" stroke="none" stroke-width="1" />
<rect x="898.5" y="60" width="13" height="9" fill="#b8a848" stroke="#333" stroke-width="1" />
<rect x="901.5" y="55" width="4" height="5" fill="#e0e0e0" stroke="#555" stroke-width="0.8" />
<rect x="905.5" y="56" width="4" height="4" fill="#c8a0c8" stroke="#555" stroke-width="0.8" />
<path d="M903.0 63 h3 l-1.5 2 z" stroke="none" fill="#222" stroke-width="1" />
<path d="M919.5 61 L926.5 61 L923 64.5 Z" stroke="none" fill="#000" stroke-width="1" shape-rendering="auto"/>
<rect x="931.5" y="53" width="1" height="18" fill="#c6c6c6" stroke="none" stroke-width="1" />
<rect x="932.5" y="53" width="1" height="18" fill="#fbfbfb" stroke="none" stroke-width="1" />
<rect x="936.3" y="56" width="14" height="12" fill="#fff" stroke="#222" stroke-width="1" />
<path d="M936.3 60 H950.3 M936.3 63 H950.3 M936.3 66 H950.3 M941.3 56 V68 M945.3 56 V68" stroke="#555" fill="none" stroke-width="1" />
<rect x="955" y="53" width="1" height="18" fill="#c6c6c6" stroke="none" stroke-width="1" />
<rect x="956" y="53" width="1" height="18" fill="#fbfbfb" stroke="none" stroke-width="1" />
<text x="967.6" y="68" font-size="16" fill="#111" text-anchor="middle" font-weight="bold" textLength="15" lengthAdjust="spacingAndGlyphs">'P'</text>
<rect x="980" y="53" width="1" height="18" fill="#c6c6c6" stroke="none" stroke-width="1" />
<rect x="981" y="53" width="1" height="18" fill="#fbfbfb" stroke="none" stroke-width="1" />
<rect x="517" y="75" width="19" height="21" fill="#f5f5f5" stroke="none" stroke-width="1" />
<rect x="517" y="75" width="19" height="1" fill="#c4c4c4" stroke="none" stroke-width="1" />
<rect x="517" y="75" width="1" height="21" fill="#c4c4c4" stroke="none" stroke-width="1" />
<rect x="537" y="75" width="19" height="21" fill="#f5f5f5" stroke="none" stroke-width="1" />
<rect x="537" y="75" width="19" height="1" fill="#c4c4c4" stroke="none" stroke-width="1" />
<rect x="537" y="75" width="1" height="21" fill="#c4c4c4" stroke="none" stroke-width="1" />
<text x="522.3" y="83" font-size="7" fill="#b02020" text-anchor="middle" font-weight="bold" >x</text>
<path d="M519.3 87 C522.3 83 530.3 83 533.3 87" stroke="#222" fill="none" stroke-width="1.5" shape-rendering="auto"/>
<path d="M526.3 85 V90" stroke="#222" fill="none" stroke-width="1" />
<path d="M523.3 91 L526.3 88 L529.3 91 Z" stroke="none" fill="#222" stroke-width="1" />
<text x="543" y="83" font-size="7" fill="#b02020" text-anchor="middle" font-weight="bold" >Y</text>
<path d="M540 87 C543 83 551 83 554 87" stroke="#222" fill="none" stroke-width="1.5" shape-rendering="auto"/>
<path d="M547 85 V90" stroke="#222" fill="none" stroke-width="1" />
<path d="M544 91 L547 88 L550 91 Z" stroke="none" fill="#222" stroke-width="1" />
<rect x="559" y="75" width="1" height="18" fill="#c6c6c6" stroke="none" stroke-width="1" />
<rect x="560" y="75" width="1" height="18" fill="#fbfbfb" stroke="none" stroke-width="1" />
<circle cx="569.5" cy="82.5" r="5.2" fill="#fff" stroke="#111" stroke-width="1.6" shape-rendering="auto"/>
<path d="M573 86 L577.5 90.5" stroke="#111" fill="none" stroke-width="2.4" shape-rendering="auto"/>
<path d="M566.5 82.5 H572.5 M569.5 79.5 V85.5" stroke="#111" fill="none" stroke-width="1" />
<circle cx="589.8" cy="82.5" r="5.2" fill="#fff" stroke="#111" stroke-width="1.6" shape-rendering="auto"/>
<path d="M593.3 86 L597.8 90.5" stroke="#111" fill="none" stroke-width="2.4" shape-rendering="auto"/>
<path d="M586.8 82.5 H592.8" stroke="#111" fill="none" stroke-width="1" />
<circle cx="609.9" cy="82.5" r="5.2" fill="#fff" stroke="#111" stroke-width="1.6" shape-rendering="auto"/>
<path d="M613.4 86 L617.9 90.5" stroke="#111" fill="none" stroke-width="2.4" shape-rendering="auto"/>
<rect x="607.4" y="80" width="5" height="5" fill="#b090b0" stroke="#444" stroke-width="0.8" />
<rect x="624" y="75" width="1" height="18" fill="#c6c6c6" stroke="none" stroke-width="1" />
<rect x="625" y="75" width="1" height="18" fill="#fbfbfb" stroke="none" stroke-width="1" />
<circle cx="635.9" cy="84" r="6" fill="#c8c8c8" stroke="#aaa" shape-rendering="auto"/>
<path d="M632.9 81 q3 2 0 4 M636.9 80 q2 3 1 6" stroke="#eee" fill="none" stroke-width="1" shape-rendering="auto"/>
<text x="655.4" y="90" font-size="17" fill="#111" text-anchor="middle" font-weight="bold" style="font-family:Liberation Serif">F</text>
<rect x="8" y="99" width="489" height="2" fill="#828282" stroke="none" stroke-width="1" />
<rect x="8" y="99" width="2" height="599" fill="#828282" stroke="none" stroke-width="1" />
<rect x="10" y="101" width="473" height="597" fill="#ffffff" stroke="none" stroke-width="1" />
<rect x="483" y="101" width="14" height="597" fill="#fafafa" stroke="none" stroke-width="1" />
<rect x="484" y="104" width="13" height="15" fill="#f4f4f4" stroke="none" stroke-width="1" />
<rect x="484" y="103" width="13.5" height="2" fill="#7c7c7c" stroke="none" stroke-width="1" />
<rect x="484" y="118" width="13.5" height="2" fill="#7c7c7c" stroke="none" stroke-width="1" />
<path d="M488 113.5 L495 113.5 L491.5 110 Z" stroke="none" fill="#000" stroke-width="1" shape-rendering="auto"/>
<rect x="484" y="120" width="13" height="182" fill="#eeeef0" stroke="none" stroke-width="1" />
<rect x="496.5" y="120" width="1" height="182" fill="#909090" stroke="none" stroke-width="1" />
<rect x="484" y="301.5" width="13.5" height="2" fill="#6e6e6e" stroke="none" stroke-width="1" />
<rect x="484" y="120" width="1" height="182" fill="#fcfcfc" stroke="none" stroke-width="1" />
<rect x="484" y="303.5" width="13" height="381" fill="#f8f8f8" stroke="none" stroke-width="1" />
<rect x="484" y="685" width="13" height="13" fill="#f2f2f2" stroke="none" stroke-width="1" />
<rect x="484" y="684" width="13.5" height="1.5" fill="#8a8a8a" stroke="none" stroke-width="1" />
<rect x="496.5" y="685" width="1" height="13" fill="#a0a0a0" stroke="none" stroke-width="1" />
<path d="M487.5 689.5 L494.5 689.5 L491 693 Z" stroke="none" fill="#000" stroke-width="1" shape-rendering="auto"/>
<rect x="10" y="698" width="473" height="13" fill="#f0f0f0" stroke="none" stroke-width="1" />
<rect x="107" y="698" width="254" height="1" fill="#303030" stroke="none" stroke-width="1" />
<rect x="12.8" y="698.2" width="14" height="13" fill="#f8f8f8" stroke="none" stroke-width="1" />
<rect x="12.8" y="698.2" width="14" height="1.5" fill="#7a7a7a" stroke="none" stroke-width="1" />
<rect x="12.8" y="698.2" width="1.5" height="13" fill="#7a7a7a" stroke="none" stroke-width="1" />
<rect x="25.3" y="698.2" width="1.5" height="13" fill="#6a6a6a" stroke="none" stroke-width="1" />
<rect x="12.8" y="709.7" width="14" height="1.5" fill="#6a6a6a" stroke="none" stroke-width="1" />
<rect x="15.8" y="700.7" width="1.5" height="8" fill="#000" stroke="none" stroke-width="1" />
<path d="M17.8 704.7 L22.8 700.7 L22.8 708.7 Z" stroke="none" fill="#000" stroke-width="1" shape-rendering="auto"/>
<rect x="27.0" y="698.2" width="14" height="13" fill="#f8f8f8" stroke="none" stroke-width="1" />
<rect x="27.0" y="698.2" width="14" height="1.5" fill="#7a7a7a" stroke="none" stroke-width="1" />
<rect x="27.0" y="698.2" width="1.5" height="13" fill="#7a7a7a" stroke="none" stroke-width="1" />
<rect x="39.5" y="698.2" width="1.5" height="13" fill="#6a6a6a" stroke="none" stroke-width="1" />
<rect x="27.0" y="709.7" width="14" height="1.5" fill="#6a6a6a" stroke="none" stroke-width="1" />
<path d="M31.0 704.7 L36.0 700.7 L36.0 708.7 Z" stroke="none" fill="#000" stroke-width="1" shape-rendering="auto"/>
<rect x="41.2" y="698.2" width="14" height="13" fill="#f8f8f8" stroke="none" stroke-width="1" />
<rect x="41.2" y="698.2" width="14" height="1.5" fill="#7a7a7a" stroke="none" stroke-width="1" />
<rect x="41.2" y="698.2" width="1.5" height="13" fill="#7a7a7a" stroke="none" stroke-width="1" />
<rect x="53.7" y="698.2" width="1.5" height="13" fill="#6a6a6a" stroke="none" stroke-width="1" />
<rect x="41.2" y="709.7" width="14" height="1.5" fill="#6a6a6a" stroke="none" stroke-width="1" />
<path d="M51.2 704.7 L46.2 700.7 L46.2 708.7 Z" stroke="none" fill="#000" stroke-width="1" shape-rendering="auto"/>
<rect x="55.39999999999999" y="698.2" width="14" height="13" fill="#f8f8f8" stroke="none" stroke-width="1" />
<rect x="55.39999999999999" y="698.2" width="14" height="1.5" fill="#7a7a7a" stroke="none" stroke-width="1" />
<rect x="55.39999999999999" y="698.2" width="1.5" height="13" fill="#7a7a7a" stroke="none" stroke-width="1" />
<rect x="67.89999999999999" y="698.2" width="1.5" height="13" fill="#6a6a6a" stroke="none" stroke-width="1" />
<rect x="55.39999999999999" y="709.7" width="14" height="1.5" fill="#6a6a6a" stroke="none" stroke-width="1" />
<rect x="65.39999999999999" y="700.7" width="1.5" height="8" fill="#000" stroke="none" stroke-width="1" />
<path d="M64.39999999999999 704.7 L59.39999999999999 700.7 L59.39999999999999 708.7 Z" stroke="none" fill="#000" stroke-width="1" shape-rendering="auto"/>
<g shape-rendering="auto">
<rect x="71" y="698" width="37" height="13" fill="#ffffff" stroke="none" stroke-width="1" />
<path d="M71 698 L77.5 711 H101 L107.7 698" stroke="#222" fill="none" stroke-width="1.1" />
<text x="77.7" y="708.6" font-size="11" fill="#111" text-anchor="start" font-weight="bold" textLength="22.5" lengthAdjust="spacingAndGlyphs">Main</text>
<path d="M107.7 698.5 H490 M104.5 705 L107.5 711 H201" stroke="#555" fill="none" stroke-width="1" />
<text x="110.7" y="708.6" font-size="11" fill="#333" text-anchor="start" font-weight="normal" textLength="16.5" lengthAdjust="spacingAndGlyphs">Text</text>
<path d="M131.5 698.5 L136.5 711 M133.5 711 L136 704" stroke="#555" fill="none" stroke-width="1" />
<text x="140.7" y="708.6" font-size="11" fill="#333" text-anchor="start" font-weight="normal" textLength="29.3" lengthAdjust="spacingAndGlyphs">Models</text>
<path d="M175.2 698.5 L180.4 711 M178 711 L180.4 704" stroke="#555" fill="none" stroke-width="1" />
<text x="182.7" y="708.6" font-size="11" fill="#333" text-anchor="start" font-weight="normal" textLength="15" lengthAdjust="spacingAndGlyphs">Info</text>
<path d="M200.7 711 L206.7 698.5" stroke="#555" fill="none" stroke-width="1" />
</g>
<rect x="361" y="698" width="1" height="13" fill="#444" stroke="none" stroke-width="1" />
<rect x="363" y="698" width="1" height="13" fill="#666" stroke="none" stroke-width="1" />
<rect x="364" y="698" width="119" height="13" fill="#f6f6f6" stroke="none" stroke-width="1" />
<rect x="364" y="698" width="14" height="13" fill="#f0f0f0" stroke="none" stroke-width="1" />
<rect x="377" y="698" width="1" height="13" fill="#999" stroke="none" stroke-width="1" />
<rect x="364" y="710" width="14" height="1" fill="#999" stroke="none" stroke-width="1" />
<path d="M373 700.5 L373 708 L369 704.5 Z" stroke="none" fill="#000" stroke-width="1" shape-rendering="auto"/>
<rect x="378" y="698" width="24" height="13" fill="#ececec" stroke="none" stroke-width="1" />
<rect x="401" y="698" width="1" height="13" fill="#a0a0a0" stroke="none" stroke-width="1" />
<rect x="378" y="710" width="24" height="1" fill="#a0a0a0" stroke="none" stroke-width="1" />
<rect x="470" y="698" width="13" height="13" fill="#f0f0f0" stroke="none" stroke-width="1" />
<rect x="483" y="698" width="1" height="13" fill="#999" stroke="none" stroke-width="1" />
<rect x="470" y="710" width="13" height="1" fill="#999" stroke="none" stroke-width="1" />
<path d="M474.5 700.5 L474.5 708 L478.5 704.5 Z" stroke="none" fill="#000" stroke-width="1" shape-rendering="auto"/>
<rect x="484" y="698" width="13" height="13" fill="#f0f0f0" stroke="none" stroke-width="1" />
<rect x="484" y="698" width="13" height="1" fill="#9a9a9a" stroke="none" stroke-width="1" />
<rect x="484" y="698" width="1" height="13" fill="#9a9a9a" stroke="none" stroke-width="1" />
<path d="M93.5 163.5 L204 163.5" stroke="#4f8c58" fill="none" stroke-width="1" />
<path d="M248 163.5 L380 163.5" stroke="#4f8c58" fill="none" stroke-width="1" />
<path d="M156.5 163.5 L156.5 219" stroke="#4f8c58" fill="none" stroke-width="1" />
<path d="M156.5 250 L156.5 289.5 L219.5 289.5 L219.5 352.5 L287 352.5" stroke="#4f8c58" fill="none" stroke-width="1" />
<path d="M156.5 289.5 L156.5 343" stroke="#4f8c58" fill="none" stroke-width="1" />
<path d="M303.5 163.5 L303.5 198.5" stroke="#4f8c58" fill="none" stroke-width="1" />
<path d="M303.5 240.5 L303.5 303.5 L331.5 303.5 L331.5 352.5 L318 352.5" stroke="#4f8c58" fill="none" stroke-width="1" />
<path d="M303.5 303.5 L303.5 333" stroke="#4f8c58" fill="none" stroke-width="1" />
<path d="M44.5 359.5 L142 359.5" stroke="#4f8c58" fill="none" stroke-width="1" />
<path d="M93.5 359.5 L93.5 415" stroke="#4f8c58" fill="none" stroke-width="1" />
<path d="M93.5 445 L93.5 485.5" stroke="#4f8c58" fill="none" stroke-width="1" />
<path d="M44.5 400 L44.5 485.5 L345.5 485.5 L345.5 442" stroke="#4f8c58" fill="none" stroke-width="1" />
<path d="M345.5 430 L345.5 387.5 L296.5 387.5" stroke="#4f8c58" fill="none" stroke-width="1" />
<path d="M149.5 401.5 L184.5 401.5 L184.5 520.5 L209 520.5" stroke="#4f8c58" fill="none" stroke-width="1" />
<path d="M259 520.5 L387.5 520.5 L387.5 240.5" stroke="#4f8c58" fill="none" stroke-width="1" />
<path d="M149.5 401.5 L149.5 423" stroke="#4f8c58" fill="none" stroke-width="1" />
<path d="M149.5 451 L149.5 485.5" stroke="#4f8c58" fill="none" stroke-width="1" />
<path d="M296.5 387.5 L296.5 422" stroke="#4f8c58" fill="none" stroke-width="1" />
<path d="M296.5 451 L296.5 485.5" stroke="#4f8c58" fill="none" stroke-width="1" />
<path d="M275.5 198.5 L324.5 198.5" stroke="#4f8c58" fill="none" stroke-width="1" />
<path d="M275.5 240.5 L324.5 240.5" stroke="#4f8c58" fill="none" stroke-width="1" />
<path d="M352.5 198.5 L422.5 198.5 L422.5 206" stroke="#4f8c58" fill="none" stroke-width="1" />
<path d="M352.5 240.5 L422.5 240.5 L422.5 232" stroke="#4f8c58" fill="none" stroke-width="1" />
<path d="M387.5 198.5 L387.5 203" stroke="#4f8c58" fill="none" stroke-width="1" />
<path d="M275.5 198.5 V202 M275.5 234 V240.5 M324.5 198.5 V202 M324.5 234 V240.5 M352.5 198.5 V203 M352.5 235 V240.5" stroke="#4a4e62" fill="none" stroke-width="1" />
<path d="M93.5 163.5 V183.5 M86.5 183.5 H101 M86.5 186.5 H101 M93.5 186.5 V216.5 M86.5 216.5 H101 M89.5 221.5 H98" stroke="#4a4e62" fill="none" stroke-width="1" />
<path d="M104.2 177 V192" stroke="#202a88" fill="none" stroke-width="1.3" shape-rendering="auto"/>
<path d="M102.2 187 L104.2 192 L106.2 187 Z" stroke="none" fill="#202a88" stroke-width="1" shape-rendering="auto"/>
<text x="62.8" y="180.5" font-size="11" fill="#4a8452" text-anchor="start" font-weight="normal" textLength="19.8" lengthAdjust="spacingAndGlyphs">47u</text>
<text x="68.8" y="192.6" font-size="11" fill="#4a8452" text-anchor="start" font-weight="normal" textLength="13.9" lengthAdjust="spacingAndGlyphs">C9</text>
<path d="M156.5 219 V223 M156.5 245 V250" stroke="#4a4e62" fill="none" stroke-width="1" />
<path d="M156.5 223 L160.3 224.83333333333334 L152.7 228.5 L160.3 232.16666666666666 L152.7 235.83333333333334 L160.3 239.5 L152.7 243.16666666666666 L156.5 245" stroke="#33364a" fill="none" stroke-width="1.1" shape-rendering="auto"/>
<path d="M149.3 227 V241" stroke="#202a88" fill="none" stroke-width="1.3" shape-rendering="auto"/>
<path d="M147.3 236 L149.3 241 L151.3 236 Z" stroke="none" fill="#202a88" stroke-width="1" shape-rendering="auto"/>
<text x="130.5" y="222.5" font-size="11" fill="#4a8452" text-anchor="start" font-weight="normal" textLength="12.3" lengthAdjust="spacingAndGlyphs">R1</text>
<text x="119" y="237.5" font-size="11" fill="#4a8452" text-anchor="start" font-weight="normal" textLength="18.8" lengthAdjust="spacingAndGlyphs">43k</text>
<path d="M204 163.5 H215.6 M237.2 163.5 H248" stroke="#4a4e62" fill="none" stroke-width="1" />
<path d="M215.6 163.5 L217.4 160.0 L221.0 167.0 L224.6 160.0 L228.2 167.0 L231.79999999999998 160.0 L235.39999999999998 167.0 L237.2 163.5" stroke="#222" fill="none" stroke-width="1.1" shape-rendering="auto"/>
<path d="M219 156 H233.5" stroke="#202a88" fill="none" stroke-width="1.3" shape-rendering="auto"/>
<path d="M224 154 L219 156 L224 158 Z" stroke="none" fill="#202a88" stroke-width="1" shape-rendering="auto"/>
<text x="219.2" y="139.8" font-size="11" fill="#4a8452" text-anchor="start" font-weight="normal" textLength="23.4" lengthAdjust="spacingAndGlyphs">6.2k</text>
<text x="219.2" y="152.6" font-size="11" fill="#4a8452" text-anchor="start" font-weight="normal" textLength="20.4" lengthAdjust="spacingAndGlyphs">R26</text>
<path d="M380 163.5 H392.5 M396.5 163.5 H414.5 V174.5 M407.5 174.5 H422.5 M410.5 179.5 H419.5" stroke="#4a4e62" fill="none" stroke-width="1" />
<path d="M392.5 156.5 V170.5 M396.5 161 V166.5" stroke="#4a4e62" fill="none" stroke-width="1" />
<path d="M386.4 156.5 H402" stroke="#202a88" fill="none" stroke-width="1.3" shape-rendering="auto"/>
<path d="M391.4 154.5 L386.4 156.5 L391.4 158.5 Z" stroke="none" fill="#202a88" stroke-width="1" shape-rendering="auto"/>
<text x="385.8" y="146.6" font-size="11" fill="#4a8452" text-anchor="start" font-weight="normal" textLength="19.8" lengthAdjust="spacingAndGlyphs">370</text>
<path d="M277.50 201.00 L277.45 200.80 L277.28 200.61 L277.01 200.44 L276.65 200.30 L276.20 200.19 L275.67 200.13 L275.07 200.13 L274.43 200.18 L273.75 200.29 L273.05 200.46 L272.35 200.70 L271.67 201.00 L271.03 201.36 L270.43 201.78 L269.90 202.26 L269.45 202.77 L269.09 203.33 L268.82 203.91 L268.65 204.51 L268.60 205.12 L268.65 205.74 L268.82 206.34 L269.09 206.92 L269.45 207.48 L269.90 207.99 L270.43 208.47 L271.03 208.89 L271.67 209.25 L272.35 209.55 L273.05 209.79 L273.75 209.96 L274.43 210.07 L275.07 210.12 L275.67 210.12 L276.20 210.06 L276.65 209.95 L277.01 209.81 L277.28 209.64 L277.45 209.45 L277.50 209.25 L277.45 209.05 L277.28 208.86 L277.01 208.69 L276.65 208.55 L276.20 208.44 L275.67 208.38 L275.07 208.38 L274.43 208.43 L273.75 208.54 L273.05 208.71 L272.35 208.95 L271.67 209.25 L271.03 209.61 L270.43 210.03 L269.90 210.51 L269.45 211.02 L269.09 211.58 L268.82 212.16 L268.65 212.76 L268.60 213.38 L268.65 213.99 L268.82 214.59 L269.09 215.17 L269.45 215.73 L269.90 216.24 L270.43 216.72 L271.03 217.14 L271.67 217.50 L272.35 217.80 L273.05 218.04 L273.75 218.21 L274.43 218.32 L275.07 218.37 L275.67 218.37 L276.20 218.31 L276.65 218.20 L277.01 218.06 L277.28 217.89 L277.45 217.70 L277.50 217.50 L277.45 217.30 L277.28 217.11 L277.01 216.94 L276.65 216.80 L276.20 216.69 L275.67 216.63 L275.07 216.63 L274.43 216.68 L273.75 216.79 L273.05 216.96 L272.35 217.20 L271.67 217.50 L271.03 217.86 L270.43 218.28 L269.90 218.76 L269.45 219.27 L269.09 219.83 L268.82 220.41 L268.65 221.01 L268.60 221.62 L268.65 222.24 L268.82 222.84 L269.09 223.42 L269.45 223.98 L269.90 224.49 L270.43 224.97 L271.03 225.39 L271.67 225.75 L272.35 226.05 L273.05 226.29 L273.75 226.46 L274.43 226.57 L275.07 226.62 L275.67 226.62 L276.20 226.56 L276.65 226.45 L277.01 226.31 L277.28 226.14 L277.45 225.95 L277.50 225.75 L277.45 225.55 L277.28 225.36 L277.01 225.19 L276.65 225.05 L276.20 224.94 L275.67 224.88 L275.07 224.88 L274.43 224.93 L273.75 225.04 L273.05 225.21 L272.35 225.45 L271.67 225.75 L271.03 226.11 L270.43 226.53 L269.90 227.01 L269.45 227.52 L269.09 228.08 L268.82 228.66 L268.65 229.26 L268.60 229.88 L268.65 230.49 L268.82 231.09 L269.09 231.67 L269.45 232.23 L269.90 232.74 L270.43 233.22 L271.03 233.64 L271.67 234.00 L272.35 234.30 L273.05 234.54 L273.75 234.71 L274.43 234.82 L275.07 234.87 L275.67 234.87 L276.20 234.81 L276.65 234.70 L277.01 234.56 L277.28 234.39 L277.45 234.20 L277.50 234.00" stroke="#2c3468" fill="none" stroke-width="1" shape-rendering="auto"/>
<path d="M322.50 201.00 L322.55 200.80 L322.69 200.61 L322.92 200.44 L323.24 200.30 L323.63 200.19 L324.09 200.13 L324.60 200.13 L325.16 200.18 L325.75 200.29 L326.35 200.46 L326.95 200.70 L327.54 201.00 L328.10 201.36 L328.61 201.78 L329.07 202.26 L329.46 202.77 L329.78 203.33 L330.01 203.91 L330.15 204.51 L330.20 205.12 L330.15 205.74 L330.01 206.34 L329.78 206.92 L329.46 207.48 L329.07 207.99 L328.61 208.47 L328.10 208.89 L327.54 209.25 L326.95 209.55 L326.35 209.79 L325.75 209.96 L325.16 210.07 L324.60 210.12 L324.09 210.12 L323.63 210.06 L323.24 209.95 L322.92 209.81 L322.69 209.64 L322.55 209.45 L322.50 209.25 L322.55 209.05 L322.69 208.86 L322.92 208.69 L323.24 208.55 L323.63 208.44 L324.09 208.38 L324.60 208.38 L325.16 208.43 L325.75 208.54 L326.35 208.71 L326.95 208.95 L327.54 209.25 L328.10 209.61 L328.61 210.03 L329.07 210.51 L329.46 211.02 L329.78 211.58 L330.01 212.16 L330.15 212.76 L330.20 213.38 L330.15 213.99 L330.01 214.59 L329.78 215.17 L329.46 215.73 L329.07 216.24 L328.61 216.72 L328.10 217.14 L327.54 217.50 L326.95 217.80 L326.35 218.04 L325.75 218.21 L325.16 218.32 L324.60 218.37 L324.09 218.37 L323.63 218.31 L323.24 218.20 L322.92 218.06 L322.69 217.89 L322.55 217.70 L322.50 217.50 L322.55 217.30 L322.69 217.11 L322.92 216.94 L323.24 216.80 L323.63 216.69 L324.09 216.63 L324.60 216.63 L325.16 216.68 L325.75 216.79 L326.35 216.96 L326.95 217.20 L327.54 217.50 L328.10 217.86 L328.61 218.28 L329.07 218.76 L329.46 219.27 L329.78 219.83 L330.01 220.41 L330.15 221.01 L330.20 221.62 L330.15 222.24 L330.01 222.84 L329.78 223.42 L329.46 223.98 L329.07 224.49 L328.61 224.97 L328.10 225.39 L327.54 225.75 L326.95 226.05 L326.35 226.29 L325.75 226.46 L325.16 226.57 L324.60 226.62 L324.09 226.62 L323.63 226.56 L323.24 226.45 L322.92 226.31 L322.69 226.14 L322.55 225.95 L322.50 225.75 L322.55 225.55 L322.69 225.36 L322.92 225.19 L323.24 225.05 L323.63 224.94 L324.09 224.88 L324.60 224.88 L325.16 224.93 L325.75 225.04 L326.35 225.21 L326.95 225.45 L327.54 225.75 L328.10 226.11 L328.61 226.53 L329.07 227.01 L329.46 227.52 L329.78 228.08 L330.01 228.66 L330.15 229.26 L330.20 229.88 L330.15 230.49 L330.01 231.09 L329.78 231.67 L329.46 232.23 L329.07 232.74 L328.61 233.22 L328.10 233.64 L327.54 234.00 L326.95 234.30 L326.35 234.54 L325.75 234.71 L325.16 234.82 L324.60 234.87 L324.09 234.87 L323.63 234.81 L323.24 234.70 L322.92 234.56 L322.69 234.39 L322.55 234.20 L322.50 234.00" stroke="#2c3468" fill="none" stroke-width="1" shape-rendering="auto"/>
<path d="M355.00 202.00 L354.95 201.80 L354.79 201.61 L354.53 201.44 L354.18 201.30 L353.74 201.19 L353.23 201.13 L352.65 201.13 L352.03 201.18 L351.37 201.29 L350.70 201.46 L350.03 201.70 L349.37 202.00 L348.75 202.36 L348.17 202.78 L347.66 203.26 L347.22 203.77 L346.87 204.33 L346.61 204.91 L346.45 205.51 L346.40 206.12 L346.45 206.74 L346.61 207.34 L346.87 207.92 L347.22 208.48 L347.66 208.99 L348.17 209.47 L348.75 209.89 L349.37 210.25 L350.03 210.55 L350.70 210.79 L351.37 210.96 L352.03 211.07 L352.65 211.12 L353.23 211.12 L353.74 211.06 L354.18 210.95 L354.53 210.81 L354.79 210.64 L354.95 210.45 L355.00 210.25 L354.95 210.05 L354.79 209.86 L354.53 209.69 L354.18 209.55 L353.74 209.44 L353.23 209.38 L352.65 209.38 L352.03 209.43 L351.37 209.54 L350.70 209.71 L350.03 209.95 L349.37 210.25 L348.75 210.61 L348.17 211.03 L347.66 211.51 L347.22 212.02 L346.87 212.58 L346.61 213.16 L346.45 213.76 L346.40 214.38 L346.45 214.99 L346.61 215.59 L346.87 216.17 L347.22 216.73 L347.66 217.24 L348.17 217.72 L348.75 218.14 L349.37 218.50 L350.03 218.80 L350.70 219.04 L351.37 219.21 L352.03 219.32 L352.65 219.37 L353.23 219.37 L353.74 219.31 L354.18 219.20 L354.53 219.06 L354.79 218.89 L354.95 218.70 L355.00 218.50 L354.95 218.30 L354.79 218.11 L354.53 217.94 L354.18 217.80 L353.74 217.69 L353.23 217.63 L352.65 217.63 L352.03 217.68 L351.37 217.79 L350.70 217.96 L350.03 218.20 L349.37 218.50 L348.75 218.86 L348.17 219.28 L347.66 219.76 L347.22 220.27 L346.87 220.83 L346.61 221.41 L346.45 222.01 L346.40 222.62 L346.45 223.24 L346.61 223.84 L346.87 224.42 L347.22 224.98 L347.66 225.49 L348.17 225.97 L348.75 226.39 L349.37 226.75 L350.03 227.05 L350.70 227.29 L351.37 227.46 L352.03 227.57 L352.65 227.62 L353.23 227.62 L353.74 227.56 L354.18 227.45 L354.53 227.31 L354.79 227.14 L354.95 226.95 L355.00 226.75 L354.95 226.55 L354.79 226.36 L354.53 226.19 L354.18 226.05 L353.74 225.94 L353.23 225.88 L352.65 225.88 L352.03 225.93 L351.37 226.04 L350.70 226.21 L350.03 226.45 L349.37 226.75 L348.75 227.11 L348.17 227.53 L347.66 228.01 L347.22 228.52 L346.87 229.08 L346.61 229.66 L346.45 230.26 L346.40 230.88 L346.45 231.49 L346.61 232.09 L346.87 232.67 L347.22 233.23 L347.66 233.74 L348.17 234.22 L348.75 234.64 L349.37 235.00 L350.03 235.30 L350.70 235.54 L351.37 235.71 L352.03 235.82 L352.65 235.87 L353.23 235.87 L353.74 235.81 L354.18 235.70 L354.53 235.56 L354.79 235.39 L354.95 235.20 L355.00 235.00" stroke="#2c3468" fill="none" stroke-width="1" shape-rendering="auto"/>
<path d="M336.5 202.6 V236 M338.5 202.6 V236 M340.5 202.6 V236" stroke="#2c3468" fill="none" stroke-width="1" shape-rendering="auto"/>
<rect x="279" y="205" width="1" height="2" fill="#2c3468" stroke="none" stroke-width="1" />
<rect x="321" y="205" width="1" height="2" fill="#2c3468" stroke="none" stroke-width="1" />
<rect x="356" y="205" width="1" height="2" fill="#2c3468" stroke="none" stroke-width="1" />
<path d="M282.5 207 V226" stroke="#202a88" fill="none" stroke-width="1.3" shape-rendering="auto"/>
<path d="M280.5 221 L282.5 226 L284.5 221 Z" stroke="none" fill="#202a88" stroke-width="1" shape-rendering="auto"/>
<text x="282.5" y="237" font-size="8" fill="#222" text-anchor="middle" font-weight="bold" >+</text>
<text x="252" y="219.2" font-size="11" fill="#4a8452" text-anchor="start" font-weight="normal" textLength="13" lengthAdjust="spacingAndGlyphs">L1</text>
<text x="245" y="230.8" font-size="11" fill="#4a8452" text-anchor="start" font-weight="normal" textLength="20" lengthAdjust="spacingAndGlyphs">22h</text>
<text x="314" y="192.2" font-size="11" fill="#4a8452" text-anchor="start" font-weight="normal" textLength="56.5" lengthAdjust="spacingAndGlyphs">RATIO=.043</text>
<path d="M387.5 203 V208.5 M380 208.5 H395 M384 213.5 H391" stroke="#4a4e62" fill="none" stroke-width="1" />
<path d="M422.5 206 V209.8 M422.5 228.7 V232" stroke="#4a4e62" fill="none" stroke-width="1" />
<path d="M422.5 209.8 L426.3 211.375 L418.7 214.525 L426.3 217.675 L418.7 220.825 L426.3 223.975 L418.7 227.125 L422.5 228.7" stroke="#33364a" fill="none" stroke-width="1.1" shape-rendering="auto"/>
<path d="M414.8 212.5 V227" stroke="#202a88" fill="none" stroke-width="1.3" shape-rendering="auto"/>
<path d="M412.8 217.5 L414.8 212.5 L416.8 217.5 Z" stroke="none" fill="#202a88" stroke-width="1" shape-rendering="auto"/>
<text x="429.4" y="216.2" font-size="11" fill="#4a8452" text-anchor="start" font-weight="normal" textLength="6.5" lengthAdjust="spacingAndGlyphs">8</text>
<text x="429" y="228.6" font-size="11" fill="#4a8452" text-anchor="start" font-weight="normal" textLength="20.5" lengthAdjust="spacingAndGlyphs">R14</text>
<circle cx="44.5" cy="379.8" r="10" fill="none" stroke="#454a60" stroke-width="1.1" shape-rendering="auto"/>
<path d="M39 380.5 C41 376.5 43.5 376.5 45 380 S49 383.5 51 380" stroke="#454a60" fill="none" stroke-width="1" shape-rendering="auto"/>
<path d="M44.5 359.5 V369.8 M44.5 389.8 V400" stroke="#4a4e62" fill="none" stroke-width="1" />
<text x="51" y="369" font-size="9" fill="#333" text-anchor="middle" font-weight="bold" >+</text>
<text x="51" y="398.5" font-size="10" fill="#333" text-anchor="middle" font-weight="bold" >-</text>
<path d="M58.7 373 V388" stroke="#202a88" fill="none" stroke-width="1.3" shape-rendering="auto"/>
<path d="M56.7 378 L58.7 373 L60.7 378 Z" stroke="none" fill="#202a88" stroke-width="1" shape-rendering="auto"/>
<text x="17.7" y="389.2" font-size="11" fill="#4a8452" text-anchor="start" font-weight="normal" textLength="13" lengthAdjust="spacingAndGlyphs">V2</text>
<circle cx="156.1" cy="359.1" r="13.6" fill="none" stroke="#2c3468" stroke-width="1" shape-rendering="auto"/>
<path d="M156.5 343 V352.5 M149 352.5 H164" stroke="#2c3468" fill="none" stroke-width="1" />
<path d="M142 359.5 H170" stroke="#2c3468" fill="none" stroke-width="1" stroke-dasharray="3 2"/>
<path d="M149.5 387 V366.5 H163.5 V369" stroke="#2c3468" fill="none" stroke-width="1" />
<text x="173.9" y="371" font-size="11" fill="#4a8452" text-anchor="start" font-weight="normal" textLength="28.7" lengthAdjust="spacingAndGlyphs">6N8S</text>
<path d="M93.5 415 V419 M93.5 440.4 V445" stroke="#4a4e62" fill="none" stroke-width="1" />
<path d="M93.5 419 L97.3 420.7833333333333 L89.7 424.35 L97.3 427.91666666666663 L89.7 431.48333333333335 L97.3 435.04999999999995 L89.7 438.6166666666667 L93.5 440.4" stroke="#33364a" fill="none" stroke-width="1.1" shape-rendering="auto"/>
<path d="M86.5 421 V438" stroke="#202a88" fill="none" stroke-width="1.3" shape-rendering="auto"/>
<path d="M84.5 426 L86.5 421 L88.5 426 Z" stroke="none" fill="#202a88" stroke-width="1" shape-rendering="auto"/>
<text x="71.8" y="435.8" font-size="11" fill="#4a8452" text-anchor="start" font-weight="normal" textLength="12.2" lengthAdjust="spacingAndGlyphs">R7</text>
<text x="63.3" y="451.2" font-size="11" fill="#4a8452" text-anchor="start" font-weight="normal" textLength="27" lengthAdjust="spacingAndGlyphs">220k</text>
<path d="M93.5 485.5 V494.5 M86 494.5 H101 M89 499.5 H98" stroke="#4a4e62" fill="none" stroke-width="1" />
<path d="M149.5 423 V426.7 M149.5 446.6 V451" stroke="#4a4e62" fill="none" stroke-width="1" />
<path d="M149.5 426.7 L153.3 428.35833333333335 L145.7 431.675 L153.3 434.9916666666667 L145.7 438.30833333333334 L153.3 441.625 L145.7 444.94166666666666 L149.5 446.6" stroke="#33364a" fill="none" stroke-width="1.1" shape-rendering="auto"/>
<path d="M143 430 V444" stroke="#202a88" fill="none" stroke-width="1.3" shape-rendering="auto"/>
<path d="M141 439 L143 444 L145 439 Z" stroke="none" fill="#202a88" stroke-width="1" shape-rendering="auto"/>
<text x="119" y="427.4" font-size="11" fill="#4a8452" text-anchor="start" font-weight="normal" textLength="20" lengthAdjust="spacingAndGlyphs">390</text>
<text x="123.8" y="441.2" font-size="11" fill="#4a8452" text-anchor="start" font-weight="normal" textLength="12.2" lengthAdjust="spacingAndGlyphs">R4</text>
<circle cx="303.1" cy="348.6" r="13.6" fill="none" stroke="#2c3468" stroke-width="1" shape-rendering="auto"/>
<path d="M303.5 333 V342.8" stroke="#2c3468" fill="none" stroke-width="1" />
<path d="M299 342.8 H308.5" stroke="#2a3aa0" fill="none" stroke-width="1.6" />
<path d="M299 345.6 H308.5 M299 348.9 H308.5 M299 352.2 H308.5" stroke="#2a3aa0" fill="none" stroke-width="1.5" stroke-dasharray="2.5 1.5"/>
<path d="M299 357.6 V355.6 H308.5 V357.6" stroke="#2a3aa0" fill="none" stroke-width="1.4" />
<path d="M296.5 387.5 V345.5 H299" stroke="#2c3468" fill="none" stroke-width="1" />
<path d="M287 352.5 H296.5" stroke="#2c3468" fill="none" stroke-width="1" />
<path d="M308.5 349.5 H310.5 V352.5 H318" stroke="#2c3468" fill="none" stroke-width="1" />
<text x="309" y="383" font-size="11" fill="#4a8452" text-anchor="start" font-weight="normal" textLength="26.8" lengthAdjust="spacingAndGlyphs">EL34</text>
<path d="M296.5 422 V425.7 M296.5 447.4 V451" stroke="#4a4e62" fill="none" stroke-width="1" />
<path d="M296.5 425.7 L300.3 427.5083333333333 L292.7 431.125 L300.3 434.7416666666667 L292.7 438.3583333333333 L300.3 441.97499999999997 L292.7 445.59166666666664 L296.5 447.4" stroke="#33364a" fill="none" stroke-width="1.1" shape-rendering="auto"/>
<path d="M289.3 429 V444" stroke="#202a88" fill="none" stroke-width="1.3" shape-rendering="auto"/>
<path d="M287.3 439 L289.3 444 L291.3 439 Z" stroke="none" fill="#202a88" stroke-width="1" shape-rendering="auto"/>
<text x="307" y="446.5" font-size="11" fill="#4a8452" text-anchor="start" font-weight="normal" textLength="23" lengthAdjust="spacingAndGlyphs">1.6k</text>
<text x="303.8" y="459.8" font-size="11" fill="#4a8452" text-anchor="start" font-weight="normal" textLength="20.2" lengthAdjust="spacingAndGlyphs">R25</text>
<path d="M345.5 430 V433.5 M338.5 433.5 H352 M338.5 437.5 H352 M345.5 437.5 V442" stroke="#4a4e62" fill="none" stroke-width="1" />
<path d="M355 430 V446" stroke="#202a88" fill="none" stroke-width="1.3" shape-rendering="auto"/>
<path d="M353 441 L355 446 L357 441 Z" stroke="none" fill="#202a88" stroke-width="1" shape-rendering="auto"/>
<text x="349.4" y="431.8" font-size="11" fill="#4a8452" text-anchor="start" font-weight="normal" textLength="27.3" lengthAdjust="spacingAndGlyphs">100u</text>
<text x="354" y="447.2" font-size="11" fill="#4a8452" text-anchor="start" font-weight="normal" textLength="16" lengthAdjust="spacingAndGlyphs">C8</text>
<path d="M209 520.5 H223.5 M245 520.5 H259" stroke="#4a4e62" fill="none" stroke-width="1" />
<path d="M223.5 520.5 L225.29166666666666 517.0 L228.875 524.0 L232.45833333333334 517.0 L236.04166666666666 524.0 L239.625 517.0 L243.20833333333334 524.0 L245 520.5" stroke="#33364a" fill="none" stroke-width="1.1" shape-rendering="auto"/>
<path d="M226 513.5 H241" stroke="#202a88" fill="none" stroke-width="1.3" shape-rendering="auto"/>
<path d="M236 511.5 L241 513.5 L236 515.5 Z" stroke="none" fill="#202a88" stroke-width="1" shape-rendering="auto"/>
<text x="226" y="509.4" font-size="11" fill="#4a8452" text-anchor="start" font-weight="normal" textLength="22.5" lengthAdjust="spacingAndGlyphs">R27</text>
<text x="224.5" y="537.2" font-size="11" fill="#4a8452" text-anchor="start" font-weight="normal" textLength="24" lengthAdjust="spacingAndGlyphs">4.7k</text>
<circle cx="156.5" cy="163.5" r="2.6" fill="#b42828" shape-rendering="auto"/>
<circle cx="303.5" cy="163.5" r="2.6" fill="#b42828" shape-rendering="auto"/>
<circle cx="303.5" cy="198.5" r="2.6" fill="#b42828" shape-rendering="auto"/>
<circle cx="387.5" cy="198.5" r="2.6" fill="#b42828" shape-rendering="auto"/>
<circle cx="303.5" cy="240.5" r="2.6" fill="#b42828" shape-rendering="auto"/>
<circle cx="387.5" cy="240.5" r="2.6" fill="#b42828" shape-rendering="auto"/>
<circle cx="156.5" cy="289.5" r="2.6" fill="#b42828" shape-rendering="auto"/>
<circle cx="303.5" cy="303.5" r="2.6" fill="#b42828" shape-rendering="auto"/>
<circle cx="93.5" cy="359.5" r="2.6" fill="#b42828" shape-rendering="auto"/>
<circle cx="149.5" cy="401.5" r="2.6" fill="#b42828" shape-rendering="auto"/>
<circle cx="296.5" cy="387.5" r="2.6" fill="#b42828" shape-rendering="auto"/>
<circle cx="93.5" cy="485.5" r="2.6" fill="#b42828" shape-rendering="auto"/>
<circle cx="149.5" cy="485.5" r="2.6" fill="#b42828" shape-rendering="auto"/>
<circle cx="296.5" cy="485.5" r="2.6" fill="#b42828" shape-rendering="auto"/>
<rect x="141.3" y="148.9" width="38.9" height="10.9" rx="3" fill="#fff" stroke="#b888d4" stroke-width="1.2" shape-rendering="auto"/>
<text x="160.75" y="157.75" font-size="9.6" fill="#262626" text-anchor="middle" font-weight="normal" textLength="35.5" lengthAdjust="spacingAndGlyphs">336.529</text>
<rect x="293.3" y="146.3" width="20.4" height="11.4" rx="3" fill="#fff" stroke="#b888d4" stroke-width="1.2" shape-rendering="auto"/>
<text x="303.5" y="155.4" font-size="9.6" fill="#262626" text-anchor="middle" font-weight="normal" textLength="17" lengthAdjust="spacingAndGlyphs">370</text>
<rect x="141.3" y="265.3" width="34.4" height="11.4" rx="3" fill="#fff" stroke="#b888d4" stroke-width="1.2" shape-rendering="auto"/>
<text x="158.5" y="274.4" font-size="9.6" fill="#262626" text-anchor="middle" font-weight="normal" textLength="31" lengthAdjust="spacingAndGlyphs">104.44</text>
<rect x="282.3" y="283.3" width="39.9" height="10.9" rx="3" fill="#fff" stroke="#b888d4" stroke-width="1.2" shape-rendering="auto"/>
<text x="302.25" y="292.15" font-size="9.6" fill="#262626" text-anchor="middle" font-weight="normal" textLength="36.5" lengthAdjust="spacingAndGlyphs">370.141</text>
<rect x="136.3" y="387.0" width="29.4" height="10.500000000000023" rx="3" fill="#fff" stroke="#b888d4" stroke-width="1.2" shape-rendering="auto"/>
<text x="151.0" y="395.65" font-size="9.6" fill="#262626" text-anchor="middle" font-weight="normal" textLength="26" lengthAdjust="spacingAndGlyphs">1.945</text>
<rect x="256.3" y="369.3" width="38.9" height="11.4" rx="3" fill="#fff" stroke="#b888d4" stroke-width="1.2" shape-rendering="auto"/>
<text x="275.75" y="378.4" font-size="9.6" fill="#262626" text-anchor="middle" font-weight="normal" textLength="35.5" lengthAdjust="spacingAndGlyphs">120.101</text>
<rect x="210.5" y="113.3" width="54" height="10.700000000000003" fill="#fff" stroke="#c44848" stroke-width="1" shape-rendering="auto"/>
<text x="237.5" y="122.05000000000001" font-size="9.6" fill="#c03c3c" text-anchor="middle" font-weight="normal" textLength="51" lengthAdjust="spacingAndGlyphs">pd=180.69m</text>
<rect x="162.5" y="226.0" width="42" height="10.5" fill="#fff" stroke="#c44848" stroke-width="1" shape-rendering="auto"/>
<text x="183.5" y="234.65" font-size="9.6" fill="#c03c3c" text-anchor="middle" font-weight="normal" textLength="39" lengthAdjust="spacingAndGlyphs">pd=1.253</text>
<rect x="243.5" y="430.5" width="41" height="10.5" fill="#fff" stroke="#c44848" stroke-width="1" shape-rendering="auto"/>
<text x="264.0" y="439.15" font-size="9.6" fill="#c03c3c" text-anchor="middle" font-weight="normal" textLength="38" lengthAdjust="spacingAndGlyphs">pd=9.015</text>
<rect x="208.0" y="548.3" width="58.0" height="9.700000000000045" fill="#fff" stroke="#c44848" stroke-width="1" shape-rendering="auto"/>
<text x="237.0" y="556.55" font-size="9.6" fill="#c03c3c" text-anchor="middle" font-weight="normal" textLength="55.0" lengthAdjust="spacingAndGlyphs">pd=799.984u</text>
<rect x="425.1" y="161.5" width="37.89999999999998" height="10.599999999999994" fill="#f4f6ff" stroke="#2c3a8c" stroke-width="1" shape-rendering="auto"/>
<text x="444.05" y="170.20000000000002" font-size="9.6" fill="#2c3a8c" text-anchor="middle" font-weight="normal" textLength="34.89999999999998" lengthAdjust="spacingAndGlyphs">81.031m</text>
<rect x="142.5" y="312.5" width="33" height="10" fill="#f4f6ff" stroke="#2c3a8c" stroke-width="1" shape-rendering="auto"/>
<text x="159.0" y="320.9" font-size="9.6" fill="#2c3a8c" text-anchor="middle" font-weight="normal" textLength="30" lengthAdjust="spacingAndGlyphs">5.397m</text>
<rect x="275.5" y="462.5" width="38" height="10" fill="#f4f6ff" stroke="#2c3a8c" stroke-width="1" shape-rendering="auto"/>
<text x="294.5" y="470.9" font-size="9.6" fill="#2c3a8c" text-anchor="middle" font-weight="normal" textLength="35" lengthAdjust="spacingAndGlyphs">75.063m</text>
<rect x="515" y="99" width="479" height="2" fill="#828282" stroke="none" stroke-width="1" />
<rect x="515" y="99" width="1" height="599" fill="#6e7680" stroke="none" stroke-width="1" />
<rect x="516" y="99" width="1" height="599" fill="#b4bac2" stroke="none" stroke-width="1" />
<rect x="517" y="101" width="477" height="597" fill="#ffffff" stroke="none" stroke-width="1" />
<text x="759.5" y="109.3" font-size="9" fill="#3a3a82" text-anchor="middle" font-weight="normal" textLength="112" lengthAdjust="spacingAndGlyphs">6н8с+EL34SE.cir V2.A=1.3</text>
<line x1="548.8" y1="141.1" x2="970.2" y2="141.1" stroke="#8c8c8c" stroke-width="1" stroke-dasharray="3 2" stroke-dashoffset="2.5"/>
<line x1="548.8" y1="169.7" x2="970.2" y2="169.7" stroke="#8c8c8c" stroke-width="1" stroke-dasharray="3 2" stroke-dashoffset="2.5"/>
<line x1="548.8" y1="198.3" x2="970.2" y2="198.3" stroke="#8c8c8c" stroke-width="1" stroke-dasharray="3 2" stroke-dashoffset="2.5"/>
<line x1="548.8" y1="226.9" x2="970.2" y2="226.9" stroke="#8c8c8c" stroke-width="1" stroke-dasharray="3 2" stroke-dashoffset="2.5"/>
<line x1="595.6" y1="112.5" x2="595.6" y2="255.5" stroke="#8c8c8c" stroke-width="1" stroke-dasharray="3 2"/>
<line x1="642.4" y1="112.5" x2="642.4" y2="255.5" stroke="#8c8c8c" stroke-width="1" stroke-dasharray="3 2"/>
<line x1="689.3" y1="112.5" x2="689.3" y2="255.5" stroke="#8c8c8c" stroke-width="1" stroke-dasharray="3 2"/>
<line x1="736.1" y1="112.5" x2="736.1" y2="255.5" stroke="#8c8c8c" stroke-width="1" stroke-dasharray="3 2"/>
<line x1="782.9" y1="112.5" x2="782.9" y2="255.5" stroke="#8c8c8c" stroke-width="1" stroke-dasharray="3 2"/>
<line x1="829.7" y1="112.5" x2="829.7" y2="255.5" stroke="#8c8c8c" stroke-width="1" stroke-dasharray="3 2"/>
<line x1="876.6" y1="112.5" x2="876.6" y2="255.5" stroke="#8c8c8c" stroke-width="1" stroke-dasharray="3 2"/>
<line x1="923.4" y1="112.5" x2="923.4" y2="255.5" stroke="#8c8c8c" stroke-width="1" stroke-dasharray="3 2"/>
<rect x="548.8" y="112.5" width="421.4" height="143.0" fill="none" stroke="#9c9c9c" stroke-width="1"/>
<text x="546.5" y="115.8" font-size="9.2" fill="#3a3a82" text-anchor="end" font-weight="normal" >7.500</text>
<text x="546.5" y="144.4" font-size="9.2" fill="#3a3a82" text-anchor="end" font-weight="normal" >6.000</text>
<text x="546.5" y="173.0" font-size="9.2" fill="#3a3a82" text-anchor="end" font-weight="normal" >4.500</text>
<text x="546.5" y="201.60000000000002" font-size="9.2" fill="#3a3a82" text-anchor="end" font-weight="normal" >3.000</text>
<text x="546.5" y="230.20000000000002" font-size="9.2" fill="#3a3a82" text-anchor="end" font-weight="normal" >1.500</text>
<text x="546.5" y="258.8" font-size="9.2" fill="#3a3a82" text-anchor="end" font-weight="normal" >0.000</text>
<text x="549.5" y="265.1" font-size="9.2" fill="#3a3a82" text-anchor="start" font-weight="normal" >1.000K</text>
<text x="595.6222222222221" y="265.1" font-size="9.2" fill="#3a3a82" text-anchor="middle" font-weight="normal" >2.000K</text>
<text x="642.4444444444445" y="265.1" font-size="9.2" fill="#3a3a82" text-anchor="middle" font-weight="normal" >3.000K</text>
<text x="689.2666666666667" y="265.1" font-size="9.2" fill="#3a3a82" text-anchor="middle" font-weight="normal" >4.000K</text>
<text x="736.0888888888888" y="265.1" font-size="9.2" fill="#3a3a82" text-anchor="middle" font-weight="normal" >5.000K</text>
<text x="782.9111111111112" y="265.1" font-size="9.2" fill="#3a3a82" text-anchor="middle" font-weight="normal" >6.000K</text>
<text x="829.7333333333333" y="265.1" font-size="9.2" fill="#3a3a82" text-anchor="middle" font-weight="normal" >7.000K</text>
<text x="876.5555555555557" y="265.1" font-size="9.2" fill="#3a3a82" text-anchor="middle" font-weight="normal" >8.000K</text>
<text x="923.3777777777777" y="265.1" font-size="9.2" fill="#3a3a82" text-anchor="middle" font-weight="normal" >9.000K</text>
<text x="970.2" y="265.1" font-size="9.2" fill="#3a3a82" text-anchor="middle" font-weight="normal" >10.000K</text>
<rect x="677.5" y="114.5" width="163" height="13" fill="#fff" stroke="none" stroke-width="1" />
<text x="759.5" y="125.2" font-size="11" fill="#3a3a82" text-anchor="middle" font-weight="normal" textLength="160.4" lengthAdjust="spacingAndGlyphs">Amplitude of V(R14) vs Frequency</text>
<line x1="548.8" y1="162" x2="548.8" y2="255" stroke="#5a5a50" stroke-width="1.2" stroke-dasharray="4 3"/>
<rect x="549" y="159" width="5" height="5" fill="#10106a" stroke="none" stroke-width="1" />
<rect x="593.1222222222221" y="252.5" width="5" height="3.5" fill="#10106a" stroke="none" stroke-width="1" />
<rect x="639.9444444444445" y="252.5" width="5" height="3.5" fill="#10106a" stroke="none" stroke-width="1" />
<rect x="686.7666666666667" y="252.5" width="5" height="3.5" fill="#10106a" stroke="none" stroke-width="1" />
<rect x="733.5888888888888" y="252.5" width="5" height="3.5" fill="#10106a" stroke="none" stroke-width="1" />
<rect x="780.411111111111" y="252.5" width="5" height="3.5" fill="#10106a" stroke="none" stroke-width="1" />
<rect x="827.2333333333333" y="252.5" width="5" height="3.5" fill="#10106a" stroke="none" stroke-width="1" />
<rect x="874.0555555555555" y="252.5" width="5" height="3.5" fill="#10106a" stroke="none" stroke-width="1" />
<rect x="920.8777777777777" y="252.5" width="5" height="3.5" fill="#10106a" stroke="none" stroke-width="1" />
<rect x="967.7" y="252.5" width="5" height="3.5" fill="#10106a" stroke="none" stroke-width="1" />
<rect x="550.5" y="147.5" width="59" height="11" fill="#f6f23a" stroke="#444" stroke-width="1" />
<text x="580" y="156.2" font-size="9.2" fill="#333" text-anchor="middle" font-weight="normal" textLength="55" lengthAdjust="spacingAndGlyphs">1.000K,5.051</text>
<text x="715.6" y="276.5" font-size="9.5" fill="#30306e" text-anchor="end" font-weight="normal" textLength="26.8" lengthAdjust="spacingAndGlyphs" stroke="#30306e" stroke-width="0.25">Левый</text>
<text x="799.6" y="276.5" font-size="9.5" fill="#30306e" text-anchor="end" font-weight="normal" textLength="32" lengthAdjust="spacingAndGlyphs" stroke="#30306e" stroke-width="0.25">Правый</text>
<text x="883.6" y="276.5" font-size="9.5" fill="#30306e" text-anchor="end" font-weight="normal" textLength="30.6" lengthAdjust="spacingAndGlyphs" stroke="#30306e" stroke-width="0.25">Дельта</text>
<text x="967.3" y="276.5" font-size="9.5" fill="#30306e" text-anchor="end" font-weight="normal" textLength="30.6" lengthAdjust="spacingAndGlyphs" stroke="#30306e" stroke-width="0.25">Наклон</text>
<text x="715.6" y="287.7" font-size="9.2" fill="#3a3a82" text-anchor="end" font-weight="normal" >5.051</text>
<text x="799.6" y="287.7" font-size="9.2" fill="#3a3a82" text-anchor="end" font-weight="normal" >5.051</text>
<text x="883.6" y="287.7" font-size="9.2" fill="#3a3a82" text-anchor="end" font-weight="normal" >0.000</text>
<text x="967.3" y="287.7" font-size="9.2" fill="#3a3a82" text-anchor="end" font-weight="normal" >INF</text>
<text x="715.6" y="299.1" font-size="9.2" fill="#3a3a82" text-anchor="end" font-weight="normal" >1.000K</text>
<text x="799.6" y="299.1" font-size="9.2" fill="#3a3a82" text-anchor="end" font-weight="normal" >1.000K</text>
<text x="883.6" y="299.1" font-size="9.2" fill="#3a3a82" text-anchor="end" font-weight="normal" >0.000</text>
<text x="967.3" y="299.1" font-size="9.2" fill="#3a3a82" text-anchor="end" font-weight="normal" >1.000</text>
<rect x="548.5" y="279.5" width="8" height="8" fill="none" stroke="#2e2e80" stroke-width="1" />
<text x="552.5" y="286.2" font-size="7.5" fill="#2e2e80" text-anchor="middle" font-weight="normal" >B</text>
<text x="559" y="287.3" font-size="9.2" fill="#3a3a82" text-anchor="start" font-weight="normal" textLength="58.3" lengthAdjust="spacingAndGlyphs">HARM(V(R14))</text>
<rect x="559" y="288.5" width="58.3" height="1" fill="#3a3a82" stroke="none" stroke-width="1" />
<text x="559" y="299" font-size="9.2" fill="#3a3a82" text-anchor="start" font-weight="normal" textLength="23.3" lengthAdjust="spacingAndGlyphs">F (Hz)</text>
<line x1="548.8" y1="336.6" x2="970.2" y2="336.6" stroke="#8c8c8c" stroke-width="1" stroke-dasharray="3 2" stroke-dashoffset="2.5"/>
<line x1="548.8" y1="365.2" x2="970.2" y2="365.2" stroke="#8c8c8c" stroke-width="1" stroke-dasharray="3 2" stroke-dashoffset="2.5"/>
<line x1="548.8" y1="393.8" x2="970.2" y2="393.8" stroke="#8c8c8c" stroke-width="1" stroke-dasharray="3 2" stroke-dashoffset="2.5"/>
<line x1="548.8" y1="422.4" x2="970.2" y2="422.4" stroke="#8c8c8c" stroke-width="1" stroke-dasharray="3 2" stroke-dashoffset="2.5"/>
<line x1="595.6" y1="308" x2="595.6" y2="451" stroke="#8c8c8c" stroke-width="1" stroke-dasharray="3 2"/>
<line x1="642.4" y1="308" x2="642.4" y2="451" stroke="#8c8c8c" stroke-width="1" stroke-dasharray="3 2"/>
<line x1="689.3" y1="308" x2="689.3" y2="451" stroke="#8c8c8c" stroke-width="1" stroke-dasharray="3 2"/>
<line x1="736.1" y1="308" x2="736.1" y2="451" stroke="#8c8c8c" stroke-width="1" stroke-dasharray="3 2"/>
<line x1="782.9" y1="308" x2="782.9" y2="451" stroke="#8c8c8c" stroke-width="1" stroke-dasharray="3 2"/>
<line x1="829.7" y1="308" x2="829.7" y2="451" stroke="#8c8c8c" stroke-width="1" stroke-dasharray="3 2"/>
<line x1="876.6" y1="308" x2="876.6" y2="451" stroke="#8c8c8c" stroke-width="1" stroke-dasharray="3 2"/>
<line x1="923.4" y1="308" x2="923.4" y2="451" stroke="#8c8c8c" stroke-width="1" stroke-dasharray="3 2"/>
<rect x="548.8" y="308" width="421.4" height="143.0" fill="none" stroke="#9c9c9c" stroke-width="1"/>
<text x="546.5" y="311.3" font-size="9.2" fill="#3a3a82" text-anchor="end" font-weight="normal" >2.500</text>
<text x="546.5" y="339.90000000000003" font-size="9.2" fill="#3a3a82" text-anchor="end" font-weight="normal" >2.000</text>
<text x="546.5" y="368.5" font-size="9.2" fill="#3a3a82" text-anchor="end" font-weight="normal" >1.500</text>
<text x="546.5" y="397.1" font-size="9.2" fill="#3a3a82" text-anchor="end" font-weight="normal" >1.000</text>
<text x="546.5" y="425.7" font-size="9.2" fill="#3a3a82" text-anchor="end" font-weight="normal" >0.500</text>
<text x="546.5" y="454.3" font-size="9.2" fill="#3a3a82" text-anchor="end" font-weight="normal" >0.000</text>
<text x="549.5" y="460.6" font-size="9.2" fill="#3a3a82" text-anchor="start" font-weight="normal" >1.000K</text>
<text x="595.6222222222221" y="460.6" font-size="9.2" fill="#3a3a82" text-anchor="middle" font-weight="normal" >2.000K</text>
<text x="642.4444444444445" y="460.6" font-size="9.2" fill="#3a3a82" text-anchor="middle" font-weight="normal" >3.000K</text>
<text x="689.2666666666667" y="460.6" font-size="9.2" fill="#3a3a82" text-anchor="middle" font-weight="normal" >4.000K</text>
<text x="736.0888888888888" y="460.6" font-size="9.2" fill="#3a3a82" text-anchor="middle" font-weight="normal" >5.000K</text>
<text x="782.9111111111112" y="460.6" font-size="9.2" fill="#3a3a82" text-anchor="middle" font-weight="normal" >6.000K</text>
<text x="829.7333333333333" y="460.6" font-size="9.2" fill="#3a3a82" text-anchor="middle" font-weight="normal" >7.000K</text>
<text x="876.5555555555557" y="460.6" font-size="9.2" fill="#3a3a82" text-anchor="middle" font-weight="normal" >8.000K</text>
<text x="923.3777777777777" y="460.6" font-size="9.2" fill="#3a3a82" text-anchor="middle" font-weight="normal" >9.000K</text>
<text x="970.2" y="460.6" font-size="9.2" fill="#3a3a82" text-anchor="middle" font-weight="normal" >10.000K</text>
<rect x="659.5" y="310" width="200" height="13" fill="#fff" stroke="none" stroke-width="1" />
<text x="759.5" y="320.8" font-size="11" fill="#3a3a82" text-anchor="middle" font-weight="normal" textLength="197.5" lengthAdjust="spacingAndGlyphs">Percent Distortion of V(R14) vs Frequency</text>
<rect x="545.8" y="448" width="6" height="3.5" fill="#b42424" stroke="none" stroke-width="1" />
<line x1="595.6" y1="451" x2="595.6" y2="350.0" stroke="#b42424" stroke-width="1.2"/>
<rect x="592.6222222222221" y="346.9848" width="6" height="6" fill="#b42424" stroke="none" stroke-width="1" />
<line x1="642.4" y1="451" x2="642.4" y2="436.7" stroke="#b42424" stroke-width="1.2"/>
<rect x="639.4444444444445" y="433.7" width="6" height="6" fill="#b42424" stroke="none" stroke-width="1" />
<rect x="686.2666666666667" y="448" width="6" height="3.5" fill="#b42424" stroke="none" stroke-width="1" />
<rect x="733.0888888888888" y="448" width="6" height="3.5" fill="#b42424" stroke="none" stroke-width="1" />
<rect x="779.911111111111" y="448" width="6" height="3.5" fill="#b42424" stroke="none" stroke-width="1" />
<rect x="826.7333333333333" y="448" width="6" height="3.5" fill="#b42424" stroke="none" stroke-width="1" />
<rect x="873.5555555555555" y="448" width="6" height="3.5" fill="#b42424" stroke="none" stroke-width="1" />
<rect x="920.3777777777777" y="448" width="6" height="3.5" fill="#b42424" stroke="none" stroke-width="1" />
<rect x="967.2" y="448" width="6" height="3.5" fill="#b42424" stroke="none" stroke-width="1" />
<text x="715.6" y="471.8" font-size="9.5" fill="#30306e" text-anchor="end" font-weight="normal" textLength="26.8" lengthAdjust="spacingAndGlyphs" stroke="#30306e" stroke-width="0.25">Левый</text>
<text x="799.6" y="471.8" font-size="9.5" fill="#30306e" text-anchor="end" font-weight="normal" textLength="32" lengthAdjust="spacingAndGlyphs" stroke="#30306e" stroke-width="0.25">Правый</text>
<text x="883.6" y="471.8" font-size="9.5" fill="#30306e" text-anchor="end" font-weight="normal" textLength="30.6" lengthAdjust="spacingAndGlyphs" stroke="#30306e" stroke-width="0.25">Дельта</text>
<text x="967.3" y="471.8" font-size="9.5" fill="#30306e" text-anchor="end" font-weight="normal" textLength="30.6" lengthAdjust="spacingAndGlyphs" stroke="#30306e" stroke-width="0.25">Наклон</text>
<text x="715.6" y="483.0" font-size="9.2" fill="#b42424" text-anchor="end" font-weight="normal" >0.000</text>
<text x="799.6" y="483.0" font-size="9.2" fill="#b42424" text-anchor="end" font-weight="normal" >2.066m</text>
<text x="883.6" y="483.0" font-size="9.2" fill="#b42424" text-anchor="end" font-weight="normal" >2.066m</text>
<text x="967.3" y="483.0" font-size="9.2" fill="#b42424" text-anchor="end" font-weight="normal" >229.543n</text>
<text x="715.6" y="494.40000000000003" font-size="9.2" fill="#3a3a82" text-anchor="end" font-weight="normal" >1.000K</text>
<text x="799.6" y="494.40000000000003" font-size="9.2" fill="#3a3a82" text-anchor="end" font-weight="normal" >10.000K</text>
<text x="883.6" y="494.40000000000003" font-size="9.2" fill="#3a3a82" text-anchor="end" font-weight="normal" >9.000K</text>
<text x="967.3" y="494.40000000000003" font-size="9.2" fill="#3a3a82" text-anchor="end" font-weight="normal" >1.000</text>
<rect x="548.5" y="475.5" width="8" height="8.5" fill="none" stroke="#b42424" stroke-width="1" />
<text x="559" y="483.5" font-size="9.2" fill="#b42424" text-anchor="start" font-weight="normal" textLength="67" lengthAdjust="spacingAndGlyphs">IHD(HARM(V(R14)</text>
<text x="559" y="494.6" font-size="9.2" fill="#3a3a82" text-anchor="start" font-weight="normal" textLength="23.3" lengthAdjust="spacingAndGlyphs">F (Hz)</text>
<line x1="548.8" y1="532.8" x2="970.2" y2="532.8" stroke="#8c8c8c" stroke-width="1" stroke-dasharray="3 2" stroke-dashoffset="2.5"/>
<line x1="548.8" y1="561.3" x2="970.2" y2="561.3" stroke="#8c8c8c" stroke-width="1" stroke-dasharray="3 2" stroke-dashoffset="2.5"/>
<line x1="548.8" y1="589.7" x2="970.2" y2="589.7" stroke="#8c8c8c" stroke-width="1" stroke-dasharray="3 2" stroke-dashoffset="2.5"/>
<line x1="548.8" y1="618.2" x2="970.2" y2="618.2" stroke="#8c8c8c" stroke-width="1" stroke-dasharray="3 2" stroke-dashoffset="2.5"/>
<line x1="633.1" y1="504.4" x2="633.1" y2="646.6" stroke="#8c8c8c" stroke-width="1" stroke-dasharray="3 2"/>
<line x1="717.4" y1="504.4" x2="717.4" y2="646.6" stroke="#8c8c8c" stroke-width="1" stroke-dasharray="3 2"/>
<line x1="801.6" y1="504.4" x2="801.6" y2="646.6" stroke="#8c8c8c" stroke-width="1" stroke-dasharray="3 2"/>
<line x1="885.9" y1="504.4" x2="885.9" y2="646.6" stroke="#8c8c8c" stroke-width="1" stroke-dasharray="3 2"/>
<rect x="548.8" y="504.4" width="421.4" height="142.2" fill="none" stroke="#9c9c9c" stroke-width="1"/>
<text x="546.5" y="507.7" font-size="9.2" fill="#3a3a82" text-anchor="end" font-weight="normal" >9.000</text>
<text x="546.5" y="536.14" font-size="9.2" fill="#3a3a82" text-anchor="end" font-weight="normal" >6.000</text>
<text x="546.5" y="564.5799999999999" font-size="9.2" fill="#3a3a82" text-anchor="end" font-weight="normal" >3.000</text>
<text x="546.5" y="593.02" font-size="9.2" fill="#3a3a82" text-anchor="end" font-weight="normal" >0.000</text>
<text x="546.5" y="621.4599999999999" font-size="9.2" fill="#3a3a82" text-anchor="end" font-weight="normal" >-3.000</text>
<text x="546.5" y="649.9" font-size="9.2" fill="#3a3a82" text-anchor="end" font-weight="normal" >-6.000</text>
<text x="549.5" y="656.2" font-size="9.2" fill="#3a3a82" text-anchor="start" font-weight="normal" >0.000m</text>
<text x="633.0799999999999" y="656.2" font-size="9.2" fill="#3a3a82" text-anchor="middle" font-weight="normal" >1.000m</text>
<text x="717.36" y="656.2" font-size="9.2" fill="#3a3a82" text-anchor="middle" font-weight="normal" >2.000m</text>
<text x="801.64" y="656.2" font-size="9.2" fill="#3a3a82" text-anchor="middle" font-weight="normal" >3.000m</text>
<text x="885.9200000000001" y="656.2" font-size="9.2" fill="#3a3a82" text-anchor="middle" font-weight="normal" >4.000m</text>
<text x="970.2" y="656.2" font-size="9.2" fill="#3a3a82" text-anchor="middle" font-weight="normal" >5.000m</text>
<rect x="681.5" y="506.5" width="157" height="13" fill="#fff" stroke="none" stroke-width="1" />
<text x="759.5" y="517" font-size="11" fill="#3a3a82" text-anchor="middle" font-weight="normal" textLength="154.4" lengthAdjust="spacingAndGlyphs">Sampled Waveform  V(R14) vs T</text>
<path d="M885.92 589.40 L886.92 592.96 L887.93 596.48 L888.93 599.93 L889.93 603.31 L890.94 606.59 L891.94 609.76 L892.94 612.79 L893.95 615.68 L894.95 618.42 L895.95 620.98 L896.96 623.35 L897.96 625.54 L898.96 627.52 L899.97 629.28 L900.97 630.83 L901.97 632.15 L902.98 633.24 L903.98 634.09 L904.98 634.70 L905.99 635.07 L906.99 635.19 L907.99 635.07 L909.00 634.70 L910.00 634.09 L911.00 633.24 L912.01 632.15 L913.01 630.83 L914.01 629.28 L915.02 627.52 L916.02 625.54 L917.02 623.35 L918.03 620.98 L919.03 618.42 L920.03 615.68 L921.04 612.79 L922.04 609.76 L923.04 606.59 L924.05 603.31 L925.05 599.93 L926.05 596.48 L927.06 592.96 L928.06 589.40 L929.06 585.82 L930.07 582.23 L931.07 578.67 L932.07 575.14 L933.08 571.68 L934.08 568.29 L935.08 565.01 L936.09 561.85 L937.09 558.84 L938.09 555.98 L939.10 553.31 L940.10 550.83 L941.10 548.56 L942.11 546.53 L943.11 544.74 L944.11 543.20 L945.12 541.93 L946.12 540.93 L947.12 540.21 L948.13 539.77 L949.13 539.63 L950.13 539.77 L951.14 540.21 L952.14 540.93 L953.14 541.93 L954.15 543.20 L955.15 544.74 L956.15 546.53 L957.16 548.56 L958.16 550.83 L959.16 553.31 L960.17 555.98 L961.17 558.84 L962.17 561.85 L963.18 565.01 L964.18 568.29 L965.18 571.68 L966.19 575.14 L967.19 578.67 L968.19 582.23 L969.20 585.82 L970.20 589.40" fill="none" stroke="#b646b6" stroke-width="1.25" shape-rendering="auto"/>
<text x="715.6" y="668.0999999999999" font-size="9.5" fill="#30306e" text-anchor="end" font-weight="normal" textLength="26.8" lengthAdjust="spacingAndGlyphs" stroke="#30306e" stroke-width="0.25">Левый</text>
<text x="799.6" y="668.0999999999999" font-size="9.5" fill="#30306e" text-anchor="end" font-weight="normal" textLength="32" lengthAdjust="spacingAndGlyphs" stroke="#30306e" stroke-width="0.25">Правый</text>
<text x="883.6" y="668.0999999999999" font-size="9.5" fill="#30306e" text-anchor="end" font-weight="normal" textLength="30.6" lengthAdjust="spacingAndGlyphs" stroke="#30306e" stroke-width="0.25">Дельта</text>
<text x="967.3" y="668.0999999999999" font-size="9.5" fill="#30306e" text-anchor="end" font-weight="normal" textLength="30.6" lengthAdjust="spacingAndGlyphs" stroke="#30306e" stroke-width="0.25">Наклон</text>
<text x="715.6" y="679.3" font-size="9.2" fill="#c23cc2" text-anchor="end" font-weight="normal" >-2.746m</text>
<text x="799.6" y="679.3" font-size="9.2" fill="#c23cc2" text-anchor="end" font-weight="normal" >25.214m</text>
<text x="883.6" y="679.3" font-size="9.2" fill="#c23cc2" text-anchor="end" font-weight="normal" >27.959m</text>
<text x="967.3" y="679.3" font-size="9.2" fill="#c23cc2" text-anchor="end" font-weight="normal" >27.996</text>
<text x="715.6" y="690.6999999999999" font-size="9.2" fill="#3a3a82" text-anchor="end" font-weight="normal" >4.000m</text>
<text x="799.6" y="690.6999999999999" font-size="9.2" fill="#3a3a82" text-anchor="end" font-weight="normal" >4.999m</text>
<text x="883.6" y="690.6999999999999" font-size="9.2" fill="#3a3a82" text-anchor="end" font-weight="normal" >999.023u</text>
<text x="967.3" y="690.6999999999999" font-size="9.2" fill="#3a3a82" text-anchor="end" font-weight="normal" >1.000</text>
<rect x="547.5" y="671.5" width="8.5" height="9" fill="none" stroke="#c23cc2" stroke-width="1" />
<text x="558" y="679.3" font-size="9.2" fill="#c23cc2" text-anchor="start" font-weight="normal" textLength="42" lengthAdjust="spacingAndGlyphs">V(R14) (V)</text>
<text x="559.3" y="690.5" font-size="9.2" fill="#3a3a82" text-anchor="start" font-weight="normal" textLength="30" lengthAdjust="spacingAndGlyphs">T (Secs)</text>
<rect x="517" y="698" width="477" height="13" fill="#f0f0f0" stroke="none" stroke-width="1" />
<rect x="629" y="697" width="350" height="1.2" fill="#303030" stroke="none" stroke-width="1" />
<rect x="515" y="697" width="1" height="14" fill="#6e7680" stroke="none" stroke-width="1" />
<rect x="516" y="697" width="1" height="14" fill="#b4bac2" stroke="none" stroke-width="1" />
<rect x="515" y="710" width="6" height="1" fill="#888" stroke="none" stroke-width="1" />
<rect x="521.5" y="697.5" width="14" height="13.5" fill="#f8f8f8" stroke="none" stroke-width="1" />
<rect x="521.5" y="697.5" width="14" height="1.5" fill="#7a7a7a" stroke="none" stroke-width="1" />
<rect x="521.5" y="697.5" width="1.5" height="13.5" fill="#7a7a7a" stroke="none" stroke-width="1" />
<rect x="534.0" y="697.5" width="1.5" height="13.5" fill="#6a6a6a" stroke="none" stroke-width="1" />
<rect x="521.5" y="709.5" width="14" height="1.5" fill="#6a6a6a" stroke="none" stroke-width="1" />
<path d="M525.5 704.0 L531.5 704.0 L528.5 707.0 Z" stroke="none" fill="#000" stroke-width="1" shape-rendering="auto"/>
<rect x="535.5" y="697.5" width="14" height="13.5" fill="#f8f8f8" stroke="none" stroke-width="1" />
<rect x="535.5" y="697.5" width="14" height="1.5" fill="#7a7a7a" stroke="none" stroke-width="1" />
<rect x="535.5" y="697.5" width="1.5" height="13.5" fill="#7a7a7a" stroke="none" stroke-width="1" />
<rect x="548.0" y="697.5" width="1.5" height="13.5" fill="#6a6a6a" stroke="none" stroke-width="1" />
<rect x="535.5" y="709.5" width="14" height="1.5" fill="#6a6a6a" stroke="none" stroke-width="1" />
<rect x="538.5" y="700.0" width="1.5" height="8" fill="#000" stroke="none" stroke-width="1" />
<path d="M540.5 704.0 L545.5 700.0 L545.5 708.0 Z" stroke="none" fill="#000" stroke-width="1" shape-rendering="auto"/>
<rect x="549.5" y="697.5" width="14" height="13.5" fill="#f8f8f8" stroke="none" stroke-width="1" />
<rect x="549.5" y="697.5" width="14" height="1.5" fill="#7a7a7a" stroke="none" stroke-width="1" />
<rect x="549.5" y="697.5" width="1.5" height="13.5" fill="#7a7a7a" stroke="none" stroke-width="1" />
<rect x="562.0" y="697.5" width="1.5" height="13.5" fill="#6a6a6a" stroke="none" stroke-width="1" />
<rect x="549.5" y="709.5" width="14" height="1.5" fill="#6a6a6a" stroke="none" stroke-width="1" />
<path d="M553.5 704.0 L558.5 700.0 L558.5 708.0 Z" stroke="none" fill="#000" stroke-width="1" shape-rendering="auto"/>
<rect x="563.5" y="697.5" width="14" height="13.5" fill="#f8f8f8" stroke="none" stroke-width="1" />
<rect x="563.5" y="697.5" width="14" height="1.5" fill="#7a7a7a" stroke="none" stroke-width="1" />
<rect x="563.5" y="697.5" width="1.5" height="13.5" fill="#7a7a7a" stroke="none" stroke-width="1" />
<rect x="576.0" y="697.5" width="1.5" height="13.5" fill="#6a6a6a" stroke="none" stroke-width="1" />
<rect x="563.5" y="709.5" width="14" height="1.5" fill="#6a6a6a" stroke="none" stroke-width="1" />
<path d="M573.5 704.0 L568.5 700.0 L568.5 708.0 Z" stroke="none" fill="#000" stroke-width="1" shape-rendering="auto"/>
<rect x="577.5" y="697.5" width="14" height="13.5" fill="#f8f8f8" stroke="none" stroke-width="1" />
<rect x="577.5" y="697.5" width="14" height="1.5" fill="#7a7a7a" stroke="none" stroke-width="1" />
<rect x="577.5" y="697.5" width="1.5" height="13.5" fill="#7a7a7a" stroke="none" stroke-width="1" />
<rect x="590.0" y="697.5" width="1.5" height="13.5" fill="#6a6a6a" stroke="none" stroke-width="1" />
<rect x="577.5" y="709.5" width="14" height="1.5" fill="#6a6a6a" stroke="none" stroke-width="1" />
<rect x="587.5" y="700.0" width="1.5" height="8" fill="#000" stroke="none" stroke-width="1" />
<path d="M586.5 704.0 L581.5 700.0 L581.5 708.0 Z" stroke="none" fill="#000" stroke-width="1" shape-rendering="auto"/>
<g shape-rendering="auto">
<rect x="592" y="698" width="37" height="13" fill="#fff" stroke="none" stroke-width="1" />
<path d="M592 697.5 L598.5 711 H623 L629.5 698" stroke="#222" fill="none" stroke-width="1" />
<text x="599.5" y="708.8" font-size="11" fill="#000" text-anchor="start" font-weight="bold" textLength="23" lengthAdjust="spacingAndGlyphs">Main</text>
</g>
<path d="M979.5 703 H993 V697" stroke="#555" fill="none" stroke-width="1.2" />
<path d="M980 704.5 H994" stroke="#999" fill="none" stroke-width="1" />
<rect x="2" y="712" width="504" height="1" fill="#eef3f7" stroke="none" stroke-width="1" />
<rect x="2" y="713" width="504" height="7" fill="#d4e0ec" stroke="none" stroke-width="1" />
<rect x="508" y="711" width="492" height="3" fill="#e6f2f8" stroke="none" stroke-width="1" />
<rect x="508" y="714" width="492" height="3" fill="#c4def0" stroke="none" stroke-width="1" />
<rect x="508" y="717" width="492" height="3" fill="#6cc4e6" stroke="none" stroke-width="1" />
</svg></body></html>
